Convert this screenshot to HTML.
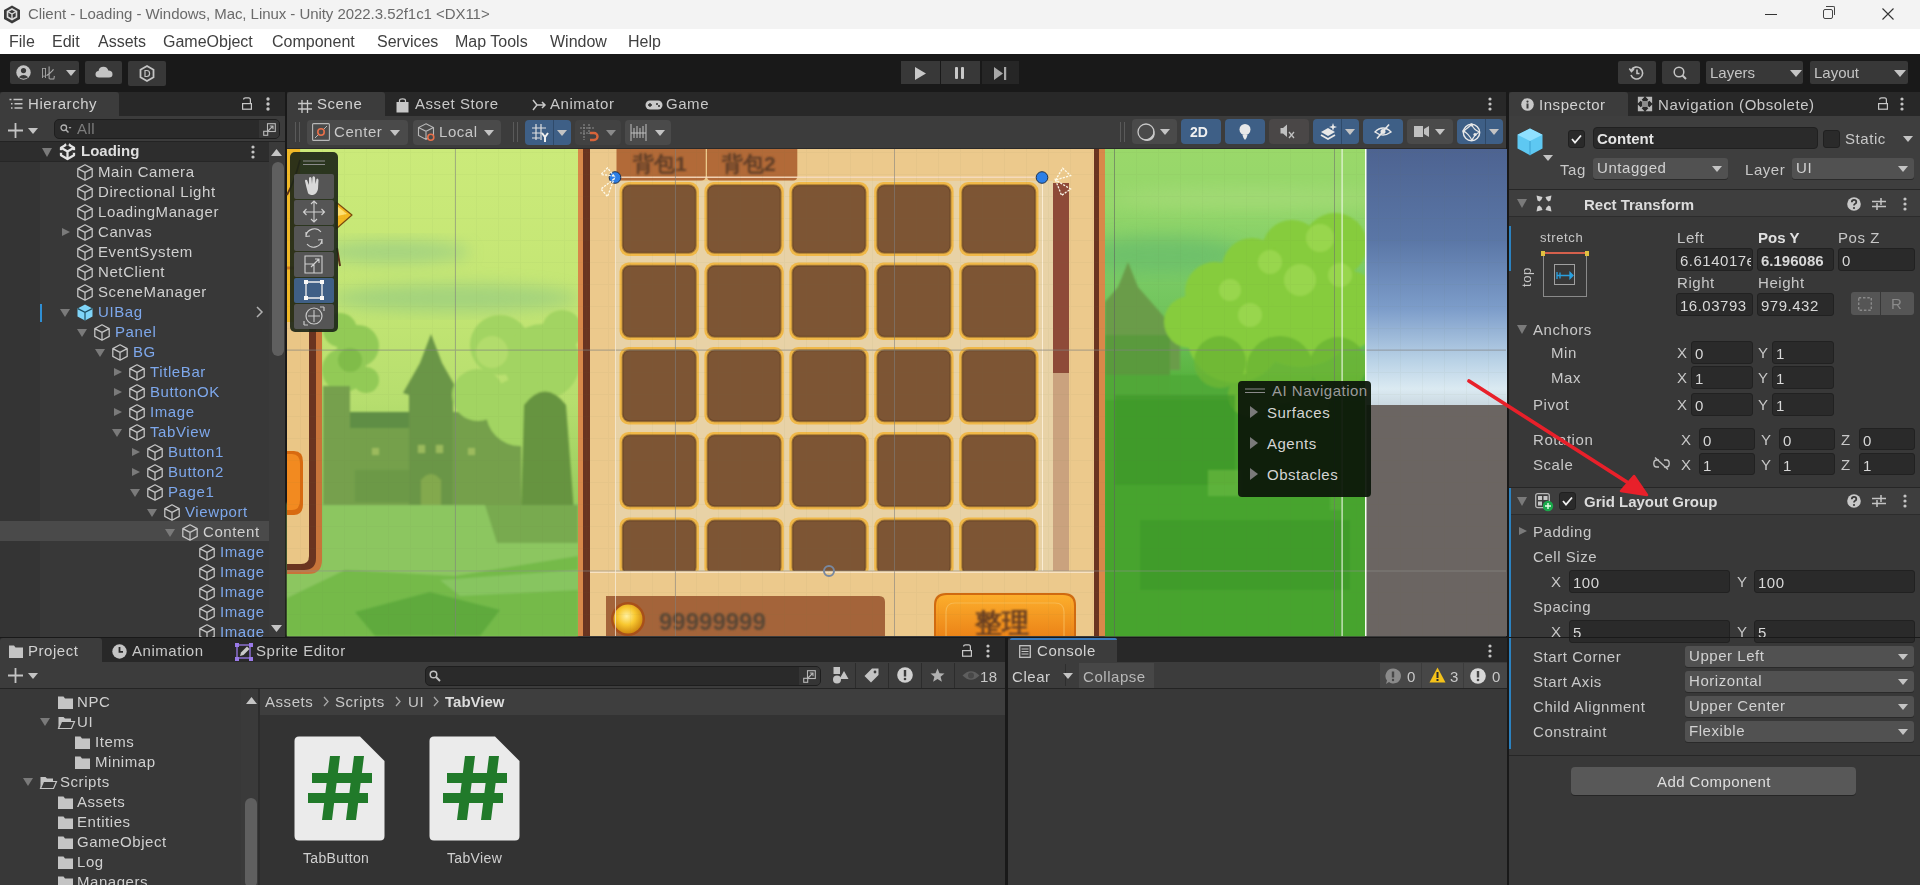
<!DOCTYPE html>
<html><head><meta charset="utf-8">
<style>
*{box-sizing:border-box;margin:0;padding:0}
html,body{width:1920px;height:885px;overflow:hidden;background:#191919;font-family:"Liberation Sans",sans-serif;-webkit-font-smoothing:antialiased;}
.t{will-change:transform}
.a{position:absolute}
.t{position:absolute;white-space:nowrap;color:#c8c8c8;font-size:14px;line-height:20px}
svg{position:absolute;overflow:visible}
.btn{position:absolute;background:#585858;border-radius:3px}
.fld{position:absolute;background:#2a2a2a;border:1px solid #212121;border-radius:3px}
.dd{position:absolute;background:#515151;border:1px solid #303030;border-radius:3px}
.tri{position:absolute;width:0;height:0;border-left:5px solid transparent;border-right:5px solid transparent;border-top:6px solid #c4c4c4}
.trir{position:absolute;width:0;height:0;border-top:5px solid transparent;border-bottom:5px solid transparent;border-left:7px solid #7a7a7a}
.trid{position:absolute;width:0;height:0;border-left:5px solid transparent;border-right:5px solid transparent;border-top:8px solid #7a7a7a}
.blue{color:#7ea8ee}
</style></head><body>

<!-- TITLE BAR -->
<div class="a" style="left:0;top:0;width:1920px;height:29px;background:#f3f3f3"></div>
<svg style="left:3px;top:5px" width="18" height="19" viewBox="0 0 18 19"><path d="M9 0.5 L17 5 L17 14 L9 18.5 L1 14 L1 5 Z" fill="#3a3a3a"/><path d="M9 4 L13.5 6.5 L13.5 12 L9 14.5 L4.5 12 L4.5 6.5 Z" fill="none" stroke="#dcdcdc" stroke-width="1.6"/><path d="M4.5 6.5 L9 9 L13.5 6.5 M9 9 L9 14.5" stroke="#dcdcdc" stroke-width="1.4" fill="none"/></svg>
<div class="t" style="left:28px;top:4px;font-size:15px;color:#6a6a6a;letter-spacing:-0.05px">Client - Loading - Windows, Mac, Linux - Unity 2022.3.52f1c1 &lt;DX11&gt;</div>
<div class="a" style="left:1765px;top:14px;width:12px;height:1px;background:#333"></div>
<div class="a" style="left:1823px;top:9px;width:10px;height:10px;border:1px solid #444;border-radius:2px"></div>
<div class="a" style="left:1826px;top:6px;width:9px;height:9px;border-top:1px solid #444;border-right:1px solid #444;border-radius:0 2px 0 0"></div>
<svg style="left:1882px;top:8px" width="12" height="12"><path d="M0.5 0.5 L11.5 11.5 M11.5 0.5 L0.5 11.5" stroke="#333" stroke-width="1.1"/></svg>
<!-- MENU BAR -->
<div class="a" style="left:0;top:29px;width:1920px;height:25px;background:#ffffff"></div>
<div class="t" style="left:9px;top:32px;font-size:16px;color:#404040">File</div>
<div class="t" style="left:52px;top:32px;font-size:16px;color:#404040">Edit</div>
<div class="t" style="left:98px;top:32px;font-size:16px;color:#404040">Assets</div>
<div class="t" style="left:163px;top:32px;font-size:16px;color:#404040">GameObject</div>
<div class="t" style="left:272px;top:32px;font-size:16px;color:#404040">Component</div>
<div class="t" style="left:377px;top:32px;font-size:16px;color:#404040">Services</div>
<div class="t" style="left:455px;top:32px;font-size:16px;color:#404040">Map Tools</div>
<div class="t" style="left:550px;top:32px;font-size:16px;color:#404040">Window</div>
<div class="t" style="left:628px;top:32px;font-size:16px;color:#404040">Help</div>
<!-- MAIN TOOLBAR -->
<div class="a" style="left:0;top:54px;width:1920px;height:38px;background:#191919"></div>
<div class="a" style="left:10px;top:61px;width:69px;height:23px;background:#383838;border-radius:2px"></div>
<svg style="left:16px;top:65px" width="15" height="15" viewBox="0 0 15 15"><circle cx="7.5" cy="7.5" r="7.2" fill="#c4c4c4"/><circle cx="7.5" cy="5.6" r="2.6" fill="#383838"/><path d="M2.8 12.3 Q7.5 7.5 12.2 12.3 Q7.5 15 2.8 12.3Z" fill="#383838"/></svg>
<div class="t" style="left:41px;top:63px;font-size:14px;color:#a8a8a8">叱</div>
<div class="tri" style="left:66px;top:70px"></div>
<div class="a" style="left:85px;top:61px;width:37px;height:23px;background:#383838;border-radius:2px"></div>
<svg style="left:95px;top:66px" width="18" height="12" viewBox="0 0 18 12"><path d="M4 11.5 Q0.5 11.5 0.5 8.2 Q0.5 5.3 3.5 5 Q4.2 0.8 8.5 0.8 Q12.5 0.8 13.3 4.6 Q17.5 4.8 17.5 8.2 Q17.5 11.5 14 11.5Z" fill="#c4c4c4"/></svg>
<div class="a" style="left:128px;top:61px;width:38px;height:25px;background:#383838;border-radius:2px"></div>
<svg style="left:139px;top:65px" width="16" height="17" viewBox="0 0 16 17"><path d="M8 1 L14.5 4.7 L14.5 12.3 L8 16 L1.5 12.3 L1.5 4.7Z" fill="none" stroke="#c4c4c4" stroke-width="1.8"/><path d="M6 5.5 H7.8 Q10.6 5.5 10.6 8.5 Q10.6 11.5 7.8 11.5 H6Z" fill="none" stroke="#c4c4c4" stroke-width="1.2"/></svg>
<div class="a" style="left:901px;top:61px;width:39px;height:23px;background:#383838"></div>
<div class="a" style="left:941px;top:61px;width:39px;height:23px;background:#383838"></div>
<div class="a" style="left:982px;top:61px;width:37px;height:23px;background:#262626"></div>
<svg style="left:915px;top:67px" width="11" height="13"><path d="M0 0 L11 6.5 L0 13Z" fill="#c8c8c8"/></svg>
<div class="a" style="left:955px;top:67px;width:3px;height:12px;background:#c8c8c8;border-radius:1px"></div>
<div class="a" style="left:961px;top:67px;width:3px;height:12px;background:#c8c8c8;border-radius:1px"></div>
<svg style="left:994px;top:67px" width="13" height="13"><path d="M0 0 L9 6.5 L0 13Z" fill="#a8a8a8"/><rect x="10" y="0" width="2.2" height="13" fill="#a8a8a8"/></svg>
<div class="a" style="left:1618px;top:61px;width:38px;height:23px;background:#383838;border-radius:2px"></div>
<svg style="left:1629px;top:66px" width="15" height="14" viewBox="0 0 15 14"><path d="M2.2 4.5 A6 6 0 1 1 2 9" fill="none" stroke="#c4c4c4" stroke-width="1.6"/><path d="M0.3 2.5 L2.5 5.5 L5 3" fill="none" stroke="#c4c4c4" stroke-width="1.5"/><path d="M8 3.5 L8 7.5 L10.5 7.5" fill="none" stroke="#c4c4c4" stroke-width="1.6"/></svg>
<div class="a" style="left:1662px;top:61px;width:38px;height:23px;background:#383838;border-radius:2px"></div>
<svg style="left:1673px;top:66px" width="15" height="14" viewBox="0 0 15 14"><circle cx="6" cy="6" r="4.8" fill="none" stroke="#c4c4c4" stroke-width="1.5"/><path d="M9.5 9.5 L13 13" stroke="#c4c4c4" stroke-width="2"/></svg>
<div class="a" style="left:1706px;top:61px;width:97px;height:23px;background:#383838;border-radius:2px"></div>
<div class="t" style="left:1710px;top:63px;font-size:15px;color:#c4c4c4">Layers</div>
<div class="tri" style="left:1790px;top:70px;border-left-width:6px;border-right-width:6px;border-top-width:7px"></div>
<div class="a" style="left:1810px;top:61px;width:98px;height:23px;background:#383838;border-radius:2px"></div>
<div class="t" style="left:1814px;top:63px;font-size:15px;color:#c4c4c4">Layout</div>
<div class="tri" style="left:1894px;top:70px;border-left-width:6px;border-right-width:6px;border-top-width:7px"></div>

<!-- HIERARCHY -->
<div class="a" style="left:0;top:92px;width:285px;height:545px;background:#383838;overflow:hidden">
<div class="a" style="left:0;top:0;width:285px;height:24px;background:#282828"></div>
<div class="a" style="left:0;top:0;width:119px;height:24px;background:#3c3c3c;border-radius:3px 3px 0 0"></div>
<svg style="left:9px;top:6px" width="14" height="12" viewBox="0 0 14 12"><path d="M0.5 1.5 H2.5 M4.5 1.5 H13.5 M2 5.8 H3.5 M5.5 5.8 H13.5 M2 10 H3.5 M5.5 10 H13.5" stroke="#c4c4c4" stroke-width="1.4"/></svg>
<div class="t" style="left:28px;top:2px;font-size:15px;letter-spacing:0.55px;color:#d0d0d0">Hierarchy</div>
<svg style="left:241px;top:5px" width="12" height="14" viewBox="0 0 12 14"><rect x="1.6" y="6.6" width="8.8" height="5.6" fill="none" stroke="#c8c8c8" stroke-width="1.2"/><path d="M2.6 2.6 Q2.6 0.8 4.6 0.8 H7.6 Q9.4 0.8 9.4 2.8 V6.6" fill="none" stroke="#c8c8c8" stroke-width="1.2"/></svg>
<svg style="left:266px;top:5px" width="4" height="14"><circle cx="2" cy="2" r="1.7" fill="#c4c4c4"/><circle cx="2" cy="7" r="1.7" fill="#c4c4c4"/><circle cx="2" cy="12" r="1.7" fill="#c4c4c4"/></svg>
<div class="a" style="left:0;top:24px;width:285px;height:25px;background:#3c3c3c"></div>
<div class="a" style="left:0;top:49px;width:285px;height:1px;background:#232323"></div>
<svg style="left:8px;top:31px" width="15" height="15"><path d="M7.5 0 V15 M0 7.5 H15" stroke="#c4c4c4" stroke-width="1.8"/></svg>
<div class="tri" style="left:28px;top:36px"></div>
<div class="a" style="left:54px;top:27px;width:226px;height:20px;background:#2a2a2a;border:1px solid #1e1e1e;border-radius:5px"></div>
<div class="a" style="left:259px;top:28px;width:20px;height:18px;background:#353535;border-radius:0 4px 4px 0"></div>
<svg style="left:60px;top:32px" width="12" height="10" viewBox="0 0 12 10"><circle cx="3.8" cy="3.8" r="2.8" fill="none" stroke="#b0b0b0" stroke-width="1.3"/><path d="M5.8 5.8 L8.5 8.5" stroke="#b0b0b0" stroke-width="1.5"/><path d="M8.5 3 L11.5 3 L10 4.8Z" fill="#b0b0b0"/></svg>
<div class="t" style="left:77px;top:27px;font-size:15px;color:#7d7d7d;letter-spacing:0.4px">All</div>
<svg style="left:263px;top:31px" width="13" height="13" viewBox="0 0 13 13"><rect x="4.5" y="0.7" width="7.8" height="7.8" fill="none" stroke="#b8b8b8" stroke-width="1.1"/><rect x="0.7" y="8.3" width="4" height="4" fill="none" stroke="#b8b8b8" stroke-width="1.1"/><path d="M4.5 8.5 L10 3 M6.8 3 H10 V6.2" fill="none" stroke="#b8b8b8" stroke-width="1.1"/></svg>
<div class="a" style="left:0;top:50px;width:40px;height:495px;background:#343434"></div>
<div class="a" style="left:0;top:50px;width:269px;height:19px;background:#2d2d2d"></div>
<div class="a" style="left:0;top:69px;width:269px;height:1px;background:#262626"></div>
<div class="a" style="left:0;top:429px;width:269px;height:20px;background:#4a4a4a"></div>
<div class="a" style="left:269px;top:50px;width:16px;height:495px;background:#3a3a3a"></div>
<svg style="left:271px;top:57px" width="11" height="7"><path d="M0 7 L5.5 0 L11 7Z" fill="#c4c4c4"/></svg>
<div class="a" style="left:272px;top:70px;width:12px;height:194px;background:#5f5f5f;border-radius:6px"></div>
<svg style="left:271px;top:533px" width="11" height="7"><path d="M0 0 L5.5 7 L11 0Z" fill="#c4c4c4"/></svg>
<div class="trid" style="left:42px;top:56px;border-left-width:5.5px;border-right-width:5.5px;border-top-width:9px"></div>
<svg style="left:60px;top:51px" width="15" height="17" viewBox="0 0 15 17"><path d="M7.5 1 L14 4.7 L14 12.3 L7.5 16 L1 12.3 L1 4.7Z" fill="none" stroke="#e4e4e4" stroke-width="2.3" stroke-linejoin="round"/><path d="M1 4.7 L7.5 8.5 L14 4.7 M7.5 8.5 L7.5 16" fill="none" stroke="#e4e4e4" stroke-width="2.3"/><g fill="#2d2d2d"><rect x="6" y="-1" width="3" height="3.5"/><rect x="-1" y="7.2" width="3.5" height="2.6"/><rect x="12.5" y="7.2" width="3.5" height="2.6"/></g><path d="M4.5 1.8 L6.2 1.2 M10.5 1.8 L8.8 1.2" stroke="#e4e4e4" stroke-width="1.5"/></svg>
<div class="t" style="left:81px;top:49px;font-size:15px;font-weight:700;color:#dedede">Loading</div>
<svg style="left:251px;top:53px" width="4" height="14"><circle cx="2" cy="2" r="1.6" fill="#c4c4c4"/><circle cx="2" cy="7" r="1.6" fill="#c4c4c4"/><circle cx="2" cy="12" r="1.6" fill="#c4c4c4"/></svg>
<svg style="left:77px;top:72px" width="16" height="17" viewBox="0 0 16 17"><path d="M8 0.8 L15.2 4.6 L15.2 12.4 L8 16.2 L0.8 12.4 L0.8 4.6Z M0.8 4.6 L8 8.4 L15.2 4.6 M8 8.4 L8 16.2" fill="none" stroke="#c4c4c4" stroke-width="1.3" stroke-linejoin="round"/></svg>
<div class="t" style="left:98px;top:70px;font-size:15px;letter-spacing:0.6px;color:#d0d0d0">Main Camera</div>
<svg style="left:77px;top:92px" width="16" height="17" viewBox="0 0 16 17"><path d="M8 0.8 L15.2 4.6 L15.2 12.4 L8 16.2 L0.8 12.4 L0.8 4.6Z M0.8 4.6 L8 8.4 L15.2 4.6 M8 8.4 L8 16.2" fill="none" stroke="#c4c4c4" stroke-width="1.3" stroke-linejoin="round"/></svg>
<div class="t" style="left:98px;top:90px;font-size:15px;letter-spacing:0.6px;color:#d0d0d0">Directional Light</div>
<svg style="left:77px;top:112px" width="16" height="17" viewBox="0 0 16 17"><path d="M8 0.8 L15.2 4.6 L15.2 12.4 L8 16.2 L0.8 12.4 L0.8 4.6Z M0.8 4.6 L8 8.4 L15.2 4.6 M8 8.4 L8 16.2" fill="none" stroke="#c4c4c4" stroke-width="1.3" stroke-linejoin="round"/></svg>
<div class="t" style="left:98px;top:110px;font-size:15px;letter-spacing:0.6px;color:#d0d0d0">LoadingManager</div>
<div class="trir" style="left:62px;top:136px;border-top-width:4.5px;border-bottom-width:4.5px;border-left-width:8px"></div>
<svg style="left:77px;top:132px" width="16" height="17" viewBox="0 0 16 17"><path d="M8 0.8 L15.2 4.6 L15.2 12.4 L8 16.2 L0.8 12.4 L0.8 4.6Z M0.8 4.6 L8 8.4 L15.2 4.6 M8 8.4 L8 16.2" fill="none" stroke="#c4c4c4" stroke-width="1.3" stroke-linejoin="round"/></svg>
<div class="t" style="left:98px;top:130px;font-size:15px;letter-spacing:0.6px;color:#d0d0d0">Canvas</div>
<svg style="left:77px;top:152px" width="16" height="17" viewBox="0 0 16 17"><path d="M8 0.8 L15.2 4.6 L15.2 12.4 L8 16.2 L0.8 12.4 L0.8 4.6Z M0.8 4.6 L8 8.4 L15.2 4.6 M8 8.4 L8 16.2" fill="none" stroke="#c4c4c4" stroke-width="1.3" stroke-linejoin="round"/></svg>
<div class="t" style="left:98px;top:150px;font-size:15px;letter-spacing:0.6px;color:#d0d0d0">EventSystem</div>
<svg style="left:77px;top:172px" width="16" height="17" viewBox="0 0 16 17"><path d="M8 0.8 L15.2 4.6 L15.2 12.4 L8 16.2 L0.8 12.4 L0.8 4.6Z M0.8 4.6 L8 8.4 L15.2 4.6 M8 8.4 L8 16.2" fill="none" stroke="#c4c4c4" stroke-width="1.3" stroke-linejoin="round"/></svg>
<div class="t" style="left:98px;top:170px;font-size:15px;letter-spacing:0.6px;color:#d0d0d0">NetClient</div>
<svg style="left:77px;top:192px" width="16" height="17" viewBox="0 0 16 17"><path d="M8 0.8 L15.2 4.6 L15.2 12.4 L8 16.2 L0.8 12.4 L0.8 4.6Z M0.8 4.6 L8 8.4 L15.2 4.6 M8 8.4 L8 16.2" fill="none" stroke="#c4c4c4" stroke-width="1.3" stroke-linejoin="round"/></svg>
<div class="t" style="left:98px;top:190px;font-size:15px;letter-spacing:0.6px;color:#d0d0d0">SceneManager</div>
<div class="trid" style="left:60px;top:217px;border-left-width:5px;border-right-width:5px;border-top-width:8px"></div>
<svg style="left:77px;top:212px" width="16" height="17" viewBox="0 0 16 17"><path d="M8 0.5 L15.5 4.5 L15.5 12.5 L8 16.5 L0.5 12.5 L0.5 4.5Z" fill="#7fd4f8"/><path d="M0.8 4.6 L8 8.4 L15.2 4.6 M8 8.4 L8 16.2" fill="none" stroke="#1d4e63" stroke-width="1.2"/></svg>
<div class="t" style="left:98px;top:210px;font-size:15px;letter-spacing:0.6px;color:#7ea8ec">UIBag</div>
<div class="trid" style="left:77px;top:237px;border-left-width:5px;border-right-width:5px;border-top-width:8px"></div>
<svg style="left:94px;top:232px" width="16" height="17" viewBox="0 0 16 17"><path d="M8 0.8 L15.2 4.6 L15.2 12.4 L8 16.2 L0.8 12.4 L0.8 4.6Z M0.8 4.6 L8 8.4 L15.2 4.6 M8 8.4 L8 16.2" fill="none" stroke="#c4c4c4" stroke-width="1.3" stroke-linejoin="round"/></svg>
<div class="t" style="left:115px;top:230px;font-size:15px;letter-spacing:0.6px;color:#7ea8ec">Panel</div>
<div class="trid" style="left:95px;top:257px;border-left-width:5px;border-right-width:5px;border-top-width:8px"></div>
<svg style="left:112px;top:252px" width="16" height="17" viewBox="0 0 16 17"><path d="M8 0.8 L15.2 4.6 L15.2 12.4 L8 16.2 L0.8 12.4 L0.8 4.6Z M0.8 4.6 L8 8.4 L15.2 4.6 M8 8.4 L8 16.2" fill="none" stroke="#c4c4c4" stroke-width="1.3" stroke-linejoin="round"/></svg>
<div class="t" style="left:133px;top:250px;font-size:15px;letter-spacing:0.6px;color:#7ea8ec">BG</div>
<div class="trir" style="left:114px;top:276px;border-top-width:4.5px;border-bottom-width:4.5px;border-left-width:8px"></div>
<svg style="left:129px;top:272px" width="16" height="17" viewBox="0 0 16 17"><path d="M8 0.8 L15.2 4.6 L15.2 12.4 L8 16.2 L0.8 12.4 L0.8 4.6Z M0.8 4.6 L8 8.4 L15.2 4.6 M8 8.4 L8 16.2" fill="none" stroke="#c4c4c4" stroke-width="1.3" stroke-linejoin="round"/></svg>
<div class="t" style="left:150px;top:270px;font-size:15px;letter-spacing:0.6px;color:#7ea8ec">TitleBar</div>
<div class="trir" style="left:114px;top:296px;border-top-width:4.5px;border-bottom-width:4.5px;border-left-width:8px"></div>
<svg style="left:129px;top:292px" width="16" height="17" viewBox="0 0 16 17"><path d="M8 0.8 L15.2 4.6 L15.2 12.4 L8 16.2 L0.8 12.4 L0.8 4.6Z M0.8 4.6 L8 8.4 L15.2 4.6 M8 8.4 L8 16.2" fill="none" stroke="#c4c4c4" stroke-width="1.3" stroke-linejoin="round"/></svg>
<div class="t" style="left:150px;top:290px;font-size:15px;letter-spacing:0.6px;color:#7ea8ec">ButtonOK</div>
<div class="trir" style="left:114px;top:316px;border-top-width:4.5px;border-bottom-width:4.5px;border-left-width:8px"></div>
<svg style="left:129px;top:312px" width="16" height="17" viewBox="0 0 16 17"><path d="M8 0.8 L15.2 4.6 L15.2 12.4 L8 16.2 L0.8 12.4 L0.8 4.6Z M0.8 4.6 L8 8.4 L15.2 4.6 M8 8.4 L8 16.2" fill="none" stroke="#c4c4c4" stroke-width="1.3" stroke-linejoin="round"/></svg>
<div class="t" style="left:150px;top:310px;font-size:15px;letter-spacing:0.6px;color:#7ea8ec">Image</div>
<div class="trid" style="left:112px;top:337px;border-left-width:5px;border-right-width:5px;border-top-width:8px"></div>
<svg style="left:129px;top:332px" width="16" height="17" viewBox="0 0 16 17"><path d="M8 0.8 L15.2 4.6 L15.2 12.4 L8 16.2 L0.8 12.4 L0.8 4.6Z M0.8 4.6 L8 8.4 L15.2 4.6 M8 8.4 L8 16.2" fill="none" stroke="#c4c4c4" stroke-width="1.3" stroke-linejoin="round"/></svg>
<div class="t" style="left:150px;top:330px;font-size:15px;letter-spacing:0.6px;color:#7ea8ec">TabView</div>
<div class="trir" style="left:132px;top:356px;border-top-width:4.5px;border-bottom-width:4.5px;border-left-width:8px"></div>
<svg style="left:147px;top:352px" width="16" height="17" viewBox="0 0 16 17"><path d="M8 0.8 L15.2 4.6 L15.2 12.4 L8 16.2 L0.8 12.4 L0.8 4.6Z M0.8 4.6 L8 8.4 L15.2 4.6 M8 8.4 L8 16.2" fill="none" stroke="#c4c4c4" stroke-width="1.3" stroke-linejoin="round"/></svg>
<div class="t" style="left:168px;top:350px;font-size:15px;letter-spacing:0.6px;color:#7ea8ec">Button1</div>
<div class="trir" style="left:132px;top:376px;border-top-width:4.5px;border-bottom-width:4.5px;border-left-width:8px"></div>
<svg style="left:147px;top:372px" width="16" height="17" viewBox="0 0 16 17"><path d="M8 0.8 L15.2 4.6 L15.2 12.4 L8 16.2 L0.8 12.4 L0.8 4.6Z M0.8 4.6 L8 8.4 L15.2 4.6 M8 8.4 L8 16.2" fill="none" stroke="#c4c4c4" stroke-width="1.3" stroke-linejoin="round"/></svg>
<div class="t" style="left:168px;top:370px;font-size:15px;letter-spacing:0.6px;color:#7ea8ec">Button2</div>
<div class="trid" style="left:130px;top:397px;border-left-width:5px;border-right-width:5px;border-top-width:8px"></div>
<svg style="left:147px;top:392px" width="16" height="17" viewBox="0 0 16 17"><path d="M8 0.8 L15.2 4.6 L15.2 12.4 L8 16.2 L0.8 12.4 L0.8 4.6Z M0.8 4.6 L8 8.4 L15.2 4.6 M8 8.4 L8 16.2" fill="none" stroke="#c4c4c4" stroke-width="1.3" stroke-linejoin="round"/></svg>
<div class="t" style="left:168px;top:390px;font-size:15px;letter-spacing:0.6px;color:#7ea8ec">Page1</div>
<div class="trid" style="left:147px;top:417px;border-left-width:5px;border-right-width:5px;border-top-width:8px"></div>
<svg style="left:164px;top:412px" width="16" height="17" viewBox="0 0 16 17"><path d="M8 0.8 L15.2 4.6 L15.2 12.4 L8 16.2 L0.8 12.4 L0.8 4.6Z M0.8 4.6 L8 8.4 L15.2 4.6 M8 8.4 L8 16.2" fill="none" stroke="#c4c4c4" stroke-width="1.3" stroke-linejoin="round"/></svg>
<div class="t" style="left:185px;top:410px;font-size:15px;letter-spacing:0.6px;color:#7ea8ec">Viewport</div>
<div class="trid" style="left:165px;top:437px;border-left-width:5px;border-right-width:5px;border-top-width:8px"></div>
<svg style="left:182px;top:432px" width="16" height="17" viewBox="0 0 16 17"><path d="M8 0.8 L15.2 4.6 L15.2 12.4 L8 16.2 L0.8 12.4 L0.8 4.6Z M0.8 4.6 L8 8.4 L15.2 4.6 M8 8.4 L8 16.2" fill="none" stroke="#c4c4c4" stroke-width="1.3" stroke-linejoin="round"/></svg>
<div class="t" style="left:203px;top:430px;font-size:15px;letter-spacing:0.6px;color:#d0d0d0">Content</div>
<svg style="left:199px;top:452px" width="16" height="17" viewBox="0 0 16 17"><path d="M8 0.8 L15.2 4.6 L15.2 12.4 L8 16.2 L0.8 12.4 L0.8 4.6Z M0.8 4.6 L8 8.4 L15.2 4.6 M8 8.4 L8 16.2" fill="none" stroke="#c4c4c4" stroke-width="1.3" stroke-linejoin="round"/></svg>
<div class="t" style="left:220px;top:450px;font-size:15px;letter-spacing:0.6px;color:#7ea8ec">Image</div>
<svg style="left:199px;top:472px" width="16" height="17" viewBox="0 0 16 17"><path d="M8 0.8 L15.2 4.6 L15.2 12.4 L8 16.2 L0.8 12.4 L0.8 4.6Z M0.8 4.6 L8 8.4 L15.2 4.6 M8 8.4 L8 16.2" fill="none" stroke="#c4c4c4" stroke-width="1.3" stroke-linejoin="round"/></svg>
<div class="t" style="left:220px;top:470px;font-size:15px;letter-spacing:0.6px;color:#7ea8ec">Image</div>
<svg style="left:199px;top:492px" width="16" height="17" viewBox="0 0 16 17"><path d="M8 0.8 L15.2 4.6 L15.2 12.4 L8 16.2 L0.8 12.4 L0.8 4.6Z M0.8 4.6 L8 8.4 L15.2 4.6 M8 8.4 L8 16.2" fill="none" stroke="#c4c4c4" stroke-width="1.3" stroke-linejoin="round"/></svg>
<div class="t" style="left:220px;top:490px;font-size:15px;letter-spacing:0.6px;color:#7ea8ec">Image</div>
<svg style="left:199px;top:512px" width="16" height="17" viewBox="0 0 16 17"><path d="M8 0.8 L15.2 4.6 L15.2 12.4 L8 16.2 L0.8 12.4 L0.8 4.6Z M0.8 4.6 L8 8.4 L15.2 4.6 M8 8.4 L8 16.2" fill="none" stroke="#c4c4c4" stroke-width="1.3" stroke-linejoin="round"/></svg>
<div class="t" style="left:220px;top:510px;font-size:15px;letter-spacing:0.6px;color:#7ea8ec">Image</div>
<svg style="left:199px;top:532px" width="16" height="17" viewBox="0 0 16 17"><path d="M8 0.8 L15.2 4.6 L15.2 12.4 L8 16.2 L0.8 12.4 L0.8 4.6Z M0.8 4.6 L8 8.4 L15.2 4.6 M8 8.4 L8 16.2" fill="none" stroke="#c4c4c4" stroke-width="1.3" stroke-linejoin="round"/></svg>
<div class="t" style="left:220px;top:530px;font-size:15px;letter-spacing:0.6px;color:#7ea8ec">Image</div>
<div class="a" style="left:40px;top:212px;width:2px;height:18px;background:#2f8fd4"></div>
<svg style="left:256px;top:214px" width="7" height="12"><path d="M1 1 L6 6 L1 11" fill="none" stroke="#b0b0b0" stroke-width="1.5"/></svg>
</div>

<!-- SCENE -->
<div class="a" style="left:287px;top:92px;width:1219px;height:545px;background:#3c3c3c;overflow:hidden">
<div class="a" style="left:0;top:0;width:1219px;height:24px;background:#282828"></div>
<div class="a" style="left:0;top:0;width:98px;height:24px;background:#3c3c3c;border-radius:3px 3px 0 0"></div>
<svg style="left:11px;top:8px" width="14" height="13" viewBox="0 0 14 13"><path d="M4 0 V13 M9.5 0 V13 M0 3.5 H14 M0 9 H14" stroke="#c8c8c8" stroke-width="1.3"/></svg>
<div class="t" style="left:30px;top:2px;font-size:15px;letter-spacing:0.55px;color:#d2d2d2">Scene</div>
<svg style="left:109px;top:6px" width="13" height="15" viewBox="0 0 13 15"><path d="M3.5 4 V2.5 Q3.5 0.8 6.5 0.8 Q9.5 0.8 9.5 2.5 V4" fill="none" stroke="#c8c8c8" stroke-width="1.2"/><rect x="0.5" y="4" width="12" height="10.5" fill="#c8c8c8"/></svg>
<div class="t" style="left:128px;top:2px;font-size:15px;letter-spacing:0.55px;color:#c8c8c8">Asset Store</div>
<svg style="left:245px;top:7px" width="14" height="12" viewBox="0 0 14 12"><path d="M1 1 L5 6 L1 11 M5 6 H13 M10 3 L13 6 L10 9" fill="none" stroke="#c8c8c8" stroke-width="1.5"/></svg>
<div class="t" style="left:263px;top:2px;font-size:15px;letter-spacing:0.55px;color:#c8c8c8">Animator</div>
<svg style="left:358px;top:8px" width="18" height="10" viewBox="0 0 18 10"><rect x="0.5" y="0.5" width="17" height="9" rx="4.5" fill="#c8c8c8"/><path d="M3 5 H7 M5 3 V7" stroke="#282828" stroke-width="1.3"/><circle cx="12" cy="4" r="1" fill="#282828"/><circle cx="14" cy="6" r="1" fill="#282828"/></svg>
<div class="t" style="left:379px;top:2px;font-size:15px;letter-spacing:0.55px;color:#c8c8c8">Game</div>
<svg style="left:1201px;top:5px" width="4" height="14"><circle cx="2" cy="2" r="1.6" fill="#c4c4c4"/><circle cx="2" cy="7" r="1.6" fill="#c4c4c4"/><circle cx="2" cy="12" r="1.6" fill="#c4c4c4"/></svg>
<div class="a" style="left:8px;top:30px;width:1px;height:20px;background:#5a5a5a"></div><div class="a" style="left:12px;top:30px;width:1px;height:20px;background:#5a5a5a"></div>
<div class="a" style="left:20px;top:28px;width:101px;height:25px;background:#4a4a4a;border-radius:4px"></div>
<svg style="left:25px;top:31px" width="18" height="18" viewBox="0 0 18 18"><rect x="0.6" y="0.6" width="16.8" height="16.8" rx="1" fill="none" stroke="#b8b8b8" stroke-width="1.1"/><path d="M3 15 L15 3" stroke="#b8b8b8" stroke-width="1"/><circle cx="9" cy="9" r="3.2" fill="#4a4a4a" stroke="#e8704a" stroke-width="1.6"/></svg>
<div class="t" style="left:47px;top:30px;font-size:15px;letter-spacing:0.55px;color:#c8c8c8">Center</div>
<div class="tri" style="left:103px;top:38px;border-left-width:5.5px;border-right-width:5.5px;border-top-width:6.5px"></div>
<div class="a" style="left:126px;top:28px;width:88px;height:25px;background:#4a4a4a;border-radius:4px"></div>
<svg style="left:130px;top:31px" width="19" height="19" viewBox="0 0 19 19"><path d="M9 0.8 L16.5 4.5 L16.5 12.5 L9 16.5 L1.5 12.5 L1.5 4.5Z M1.5 4.5 L9 8.3 L16.5 4.5 M9 8.3 V16.5" fill="none" stroke="#b8b8b8" stroke-width="1.1"/><circle cx="13.8" cy="14.2" r="3" fill="#4a4a4a" stroke="#e8704a" stroke-width="1.6"/></svg>
<div class="t" style="left:152px;top:30px;font-size:15px;letter-spacing:0.55px;color:#c8c8c8">Local</div>
<div class="tri" style="left:197px;top:38px;border-left-width:5.5px;border-right-width:5.5px;border-top-width:6.5px"></div>
<div class="a" style="left:226px;top:30px;width:1px;height:20px;background:#5a5a5a"></div><div class="a" style="left:230px;top:30px;width:1px;height:20px;background:#5a5a5a"></div>
<div class="a" style="left:238px;top:28px;width:46px;height:25px;background:#3e5f86;border-radius:4px"></div>
<div class="a" style="left:266px;top:28px;width:1px;height:25px;background:#2f4a6a"></div>
<svg style="left:245px;top:32px" width="18" height="18" viewBox="0 0 18 18"><path d="M4 0 V16 M9 0 V16 M0 4 H14 M0 9 H10 M0 14 H8" stroke="#e0e0e0" stroke-width="1.2"/><path d="M10 9 L13 13 L16 9 M13 13 V18" fill="none" stroke="#f0f0f0" stroke-width="2"/></svg>
<div class="tri" style="left:270px;top:38px;border-left-width:5px;border-right-width:5px;border-top-width:6px"></div>
<div class="a" style="left:288px;top:28px;width:46px;height:25px;background:#424242;border-radius:4px"></div>
<svg style="left:293px;top:32px" width="18" height="18" viewBox="0 0 18 18"><path d="M4 0 V16 M9 0 V10 M0 4 H14 M0 9 H10" stroke="#8a8a8a" stroke-width="1.1" stroke-dasharray="2 1"/><path d="M10 9 H14 A3.5 3.5 0 0 1 14 16 H10" fill="none" stroke="#d8643a" stroke-width="2.4"/></svg>
<div class="tri" style="left:319px;top:38px;border-left-width:5px;border-right-width:5px;border-top-width:6px;border-top-color:#8a8a8a"></div>
<div class="a" style="left:338px;top:28px;width:46px;height:25px;background:#4a4a4a;border-radius:4px"></div>
<svg style="left:343px;top:32px" width="17" height="17" viewBox="0 0 17 17"><path d="M1 0 V17 M16 0 V17 M4 4 V14 M7 2 V14 M10 4 V14 M13 2 V14 M1 9 H16" stroke="#c0c0c0" stroke-width="1"/></svg>
<div class="tri" style="left:368px;top:38px;border-left-width:5px;border-right-width:5px;border-top-width:6px"></div>
<div class="a" style="left:833px;top:30px;width:1px;height:20px;background:#5a5a5a"></div><div class="a" style="left:837px;top:30px;width:1px;height:20px;background:#5a5a5a"></div>
<div class="a" style="left:845px;top:27px;width:45px;height:25px;background:#4a4a4a;border-radius:4px"></div>
<svg style="left:850px;top:31px" width="18" height="18" viewBox="0 0 18 18"><circle cx="9" cy="9" r="8" fill="none" stroke="#c8c8c8" stroke-width="1.3"/><path d="M5 15.5 A8 8 0 0 0 16 6 A6 6 0 0 1 5 15.5Z" fill="#c8c8c8"/></svg>
<div class="tri" style="left:873px;top:37px;border-left-width:5px;border-right-width:5px;border-top-width:6px"></div>
<div class="a" style="left:894px;top:27px;width:40px;height:25px;background:#3e5f86;border-radius:4px"></div>
<div class="t" style="left:903px;top:30px;font-size:14px;font-weight:700;color:#f0f0f0">2D</div>
<div class="a" style="left:938px;top:27px;width:40px;height:25px;background:#3e5f86;border-radius:4px"></div>
<svg style="left:951px;top:31px" width="14" height="18" viewBox="0 0 14 18"><circle cx="7" cy="6.5" r="5.5" fill="#e8e8e8"/><path d="M4.5 12 H9.5 L8.5 15 L7 17 L5.5 15Z" fill="#e8e8e8"/></svg>
<div class="a" style="left:982px;top:27px;width:40px;height:25px;background:#4a4747;border-radius:4px"></div>
<svg style="left:993px;top:32px" width="18" height="16" viewBox="0 0 18 16"><path d="M0.5 4 H3 L7 0.5 V13 L3 9.5 H0.5Z" fill="#c0c0c0"/><path d="M9 8 L14 14 M14 8 L9 14" stroke="#c0c0c0" stroke-width="1.3"/></svg>
<div class="a" style="left:1026px;top:27px;width:46px;height:25px;background:#3e5f86;border-radius:4px"></div>
<div class="a" style="left:1054px;top:27px;width:1px;height:25px;background:#2f4a6a"></div>
<svg style="left:1033px;top:31px" width="18" height="17" viewBox="0 0 18 17"><path d="M1 9 L8 5 L15 9 L8 13Z" fill="#e8e8e8"/><path d="M1 12 L8 16 L15 12" fill="none" stroke="#e8e8e8" stroke-width="1.8"/><path d="M13 0 L14 3 L17 4 L14 5 L13 8 L12 5 L9 4 L12 3Z" fill="#e8e8e8"/></svg>
<div class="tri" style="left:1058px;top:37px;border-left-width:5px;border-right-width:5px;border-top-width:6px"></div>
<div class="a" style="left:1076px;top:27px;width:40px;height:25px;background:#3e5f86;border-radius:4px"></div>
<svg style="left:1087px;top:32px" width="18" height="15" viewBox="0 0 18 15"><path d="M1 8 Q9 0 17 8 Q9 14 1 8Z" fill="none" stroke="#e8e8e8" stroke-width="1.4"/><circle cx="9" cy="7.5" r="2.5" fill="#e8e8e8"/><path d="M3 14.5 L15 0.5" stroke="#e8e8e8" stroke-width="1.6"/></svg>
<div class="a" style="left:1120px;top:27px;width:46px;height:25px;background:#4a4a4a;border-radius:4px"></div>
<svg style="left:1127px;top:33px" width="16" height="13" viewBox="0 0 16 13"><rect x="0" y="1" width="9" height="11" fill="#c0c0c0"/><path d="M10 4 L15 1 V12 L10 9Z" fill="#c0c0c0"/></svg>
<div class="tri" style="left:1148px;top:37px;border-left-width:5px;border-right-width:5px;border-top-width:6px"></div>
<div class="a" style="left:1170px;top:27px;width:46px;height:25px;background:#3e5f86;border-radius:4px"></div>
<div class="a" style="left:1198px;top:27px;width:1px;height:25px;background:#2f4a6a"></div>
<svg style="left:1175px;top:31px" width="19" height="19" viewBox="0 0 19 19"><circle cx="9.5" cy="9.5" r="8.2" fill="none" stroke="#e8e8e8" stroke-width="1.4"/><path d="M1.5 8 Q6 5 9.5 1.5 M9.5 1.5 Q12 7 17.5 9 M17.5 9 Q12 12 10 17.5 M1.5 8 Q7 11 10 17.5" fill="none" stroke="#e8e8e8" stroke-width="1.2"/><circle cx="9.5" cy="1.8" r="1.6" fill="#e8e8e8"/><circle cx="1.8" cy="8" r="1.6" fill="#e8e8e8"/><circle cx="13" cy="11.5" r="1.6" fill="#e8e8e8"/></svg>
<div class="tri" style="left:1202px;top:37px;border-left-width:5px;border-right-width:5px;border-top-width:6px"></div>
<div class="a" style="left:0;top:56px;width:1219px;height:1px;background:#2a2a2a"></div>
</div>
<svg style="left:287px;top:149px" width="1219" height="487" viewBox="287 149 1219 487">
<defs>
<linearGradient id="gbg" x1="0" y1="0" x2="0" y2="1"><stop offset="0" stop-color="#cbea7a"/><stop offset="0.3" stop-color="#c4e674"/><stop offset="0.52" stop-color="#b6de6e"/><stop offset="0.72" stop-color="#98cc5e"/><stop offset="1" stop-color="#82c452"/></linearGradient>
<linearGradient id="gbr" x1="0" y1="0" x2="0" y2="1"><stop offset="0" stop-color="#9ad86a"/><stop offset="0.12" stop-color="#94d66a"/><stop offset="0.24" stop-color="#7ccc66"/><stop offset="0.38" stop-color="#6cc058"/><stop offset="0.48" stop-color="#56b23c"/><stop offset="1" stop-color="#44a42c"/></linearGradient>
<linearGradient id="gsky" x1="0" y1="0" x2="0" y2="1"><stop offset="0" stop-color="#4d6391"/><stop offset="0.35" stop-color="#5a76a6"/><stop offset="0.62" stop-color="#7d9dca"/><stop offset="0.82" stop-color="#b9d2e6"/><stop offset="0.93" stop-color="#dbeaf2"/><stop offset="1" stop-color="#c8d6de"/></linearGradient>
<linearGradient id="gbtn" x1="0" y1="0" x2="0" y2="1"><stop offset="0" stop-color="#fcae2c"/><stop offset="1" stop-color="#ec8418"/></linearGradient>
<radialGradient id="gcoin" cx="0.45" cy="0.4" r="0.6"><stop offset="0" stop-color="#fff0a0"/><stop offset="0.5" stop-color="#f8c830"/><stop offset="1" stop-color="#d08a10"/></radialGradient>
<pattern id="mgrid" x="454" y="350" width="22" height="22" patternUnits="userSpaceOnUse"><path d="M0.5 0 V22 M0 0.5 H22" stroke="#607040" stroke-width="1" fill="none"/></pattern>
<filter id="b3"><feGaussianBlur stdDeviation="3"/></filter>
<filter id="b8"><feGaussianBlur stdDeviation="8"/></filter>
<filter id="b1"><feGaussianBlur stdDeviation="0.9"/></filter>
</defs>
<rect x="287" y="149" width="291" height="487" fill="url(#gbg)"/>
<g filter="url(#b8)" opacity="0.75"><ellipse cx="395" cy="252" rx="75" ry="11" fill="#98cc84"/><ellipse cx="455" cy="298" rx="125" ry="14" fill="#98cc80"/></g>
<g filter="url(#b1)">
<g fill="#92ca56"><circle cx="340" cy="330" r="17"/><circle cx="358" cy="346" r="21"/><circle cx="344" cy="370" r="22"/><circle cx="366" cy="380" r="13"/></g><circle cx="350" cy="360" r="12" fill="#80bc4a"/>
<rect x="287" y="503" width="291" height="133" fill="#8cc660"/>
<rect x="323" y="386" width="27" height="119" fill="#76a04e"/><rect x="350" y="412" width="171" height="93" fill="#74a04c"/><rect x="350" y="412" width="60" height="16" fill="#5f8e44"/><rect x="355" y="470" width="55" height="32" fill="#6a9646" opacity="0.7"/>
<path d="M409 505 V395 L403 393 L420 363 L431 334 L442 363 L459 393 L453 395 V505Z" fill="#6a9646"/>
<g fill="#a6c262" opacity="0.8"><rect x="418" y="445" width="7" height="8"/><rect x="436" y="445" width="7" height="8"/><rect x="372" y="448" width="7" height="7"/><rect x="468" y="448" width="7" height="7"/></g>
<path d="M421 505 V480 Q431 468 441 480 V505Z" fill="#8aae50" opacity="0.8"/>
<g fill="#a2d462"><circle cx="500" cy="345" r="30"/><circle cx="542" cy="362" r="38"/><circle cx="478" cy="395" r="26"/><circle cx="520" cy="412" r="34"/><circle cx="562" cy="330" r="20"/></g><circle cx="492" cy="352" r="16" fill="#b2dc6c"/>
<path d="M521 512 L524 405 Q545 378 566 405 L574 512Z" fill="#66943f"/>
<path d="M485 505 H578 V543 H497Z" fill="#78aa50"/>
<path d="M287 598 L345 570 L455 576 L578 556 L578 636 L287 636Z" fill="#74ba4a"/><path d="M355 612 L430 592 L500 610 L480 636 L375 636Z" fill="#5eaa3c"/><path d="M440 580 L578 570 L578 590 L460 596Z" fill="#8cc866" opacity="0.8"/>
</g>
<rect x="1105" y="149" width="261" height="487" fill="url(#gbr)"/>
<g filter="url(#b8)" opacity="0.7"><ellipse cx="1160" cy="255" rx="85" ry="18" fill="#68bc6c"/><ellipse cx="1250" cy="198" rx="140" ry="10" fill="#a8dc7a"/></g>
<g filter="url(#b1)">
<path d="M1105 360 V302 L1118 287 L1128 262 L1138 287 L1180 335 V370 H1105Z" fill="#6a9c48"/>
<rect x="1105" y="335" width="65" height="70" fill="#5a9a3e"/><rect x="1105" y="395" width="261" height="241" fill="#46a42e"/><rect x="1105" y="375" width="261" height="25" fill="#50aa36" opacity="0.9"/>
<g fill="#86cc3c"><circle cx="1335" cy="245" r="32"/><circle cx="1292" cy="250" r="30"/><circle cx="1252" cy="268" r="30"/><circle cx="1215" cy="292" r="30"/><circle cx="1190" cy="322" r="26"/><circle cx="1300" cy="305" r="62"/><circle cx="1235" cy="335" r="48"/><circle cx="1345" cy="310" r="40"/></g>
<g fill="#9cd850" opacity="0.85"><circle cx="1320" cy="238" r="14"/><circle cx="1270" cy="262" r="12"/><circle cx="1230" cy="290" r="11"/><circle cx="1300" cy="280" r="16"/><circle cx="1250" cy="315" r="12"/><circle cx="1340" cy="275" r="12"/></g>
<g fill="#6cb636" opacity="0.85"><circle cx="1280" cy="370" r="34"/><circle cx="1220" cy="362" r="26"/><circle cx="1338" cy="365" r="28"/><circle cx="1250" cy="395" r="22"/><circle cx="1310" cy="400" r="20"/></g>

<rect x="1115" y="395" width="120" height="90" fill="#3e9628" opacity="0.6"/><rect x="1208" y="470" width="34" height="26" fill="#6cbc44" opacity="0.6"/><rect x="1140" y="520" width="210" height="70" fill="#3a9826" opacity="0.6"/><rect x="1330" y="480" width="12" height="30" fill="#5cb43c" opacity="0.6"/>
</g>
<rect x="1366" y="149" width="141" height="258" fill="url(#gsky)"/>
<rect x="1366" y="405" width="141" height="231" fill="#6b6562"/>
<path d="M287 320 H322 V560 Q322 574 308 574 H287Z" fill="#c8743a"/>
<path d="M287 320 H316 V558 Q316 570 304 570 H287Z" fill="#6a3420"/>
<path d="M287 320 H309 V556 Q309 564 301 564 H287Z" fill="#eac686"/>
<path d="M287 451 H294 Q303 451 303 462 V504 Q303 515 294 515 H287Z" fill="#d86a10"/><path d="M287 454 H292 Q300 454 300 464 V500 Q300 510 292 510 H287Z" fill="#f28a20"/>
<path d="M287 149 H300 L300 322 H287Z" fill="#f0b828"/><path d="M287 195 Q295 180 300 160" fill="none" stroke="#5a3018" stroke-width="1.8"/><path d="M287 268 L300 268" stroke="#c87820" stroke-width="3"/>
<path d="M336 202 L352 215 L336 229Z" fill="#f4b820" stroke="#7a4a10" stroke-width="1.2" stroke-linejoin="round"/><path d="M337 206 L347 214 L337 216Z" fill="#ffe070"/><path d="M337 248 L340 266" stroke="#5a3018" stroke-width="2"/>
<rect x="578" y="149" width="527" height="487" fill="#d8884a"/>
<rect x="583" y="149" width="516" height="487" fill="#6a3420"/>
<rect x="590" y="149" width="504" height="487" fill="#ecc98c"/>
<path d="M616.5 149 H705.7 V176 Q705.7 180.5 701 180.5 H621 Q616.5 180.5 616.5 176Z" fill="#b26a38"/>
<path d="M707 149 H797.3 V176 Q797.3 180.5 793 180.5 H711 Q707 180.5 707 176Z" fill="#b26a38"/>
<rect x="615" y="176.5" width="428" height="1.5" fill="#f6dcc0" opacity="0.9"/>
<g filter="url(#b1)" fill="#5e3c26"><text x="633" y="171" font-family="Liberation Sans" font-size="21" font-weight="700">背包1</text><text x="722" y="171" font-family="Liberation Sans" font-size="21" font-weight="700">背包2</text></g>
<rect x="616" y="181" width="437" height="390" fill="#e8d2a6"/>
<g>
<rect x="619.5" y="182" width="79.4" height="74" rx="9" fill="#f0b848"/>
<rect x="622.7" y="185.2" width="73" height="67.6" rx="7" fill="#7d5534"/>
<rect x="622.7" y="185.2" width="73" height="67.6" rx="7" fill="none" stroke="#5e3c22" stroke-width="2" opacity="0.5"/>
<rect x="704.4" y="182" width="79.4" height="74" rx="9" fill="#f0b848"/>
<rect x="707.6" y="185.2" width="73" height="67.6" rx="7" fill="#7d5534"/>
<rect x="707.6" y="185.2" width="73" height="67.6" rx="7" fill="none" stroke="#5e3c22" stroke-width="2" opacity="0.5"/>
<rect x="789.3" y="182" width="79.4" height="74" rx="9" fill="#f0b848"/>
<rect x="792.5" y="185.2" width="73" height="67.6" rx="7" fill="#7d5534"/>
<rect x="792.5" y="185.2" width="73" height="67.6" rx="7" fill="none" stroke="#5e3c22" stroke-width="2" opacity="0.5"/>
<rect x="874.2" y="182" width="79.4" height="74" rx="9" fill="#f0b848"/>
<rect x="877.4" y="185.2" width="73" height="67.6" rx="7" fill="#7d5534"/>
<rect x="877.4" y="185.2" width="73" height="67.6" rx="7" fill="none" stroke="#5e3c22" stroke-width="2" opacity="0.5"/>
<rect x="959.1" y="182" width="79.4" height="74" rx="9" fill="#f0b848"/>
<rect x="962.3" y="185.2" width="73" height="67.6" rx="7" fill="#7d5534"/>
<rect x="962.3" y="185.2" width="73" height="67.6" rx="7" fill="none" stroke="#5e3c22" stroke-width="2" opacity="0.5"/>
<rect x="619.5" y="262.5" width="79.4" height="77.5" rx="9" fill="#f0b848"/>
<rect x="622.7" y="265.7" width="73" height="71.1" rx="7" fill="#7d5534"/>
<rect x="622.7" y="265.7" width="73" height="71.1" rx="7" fill="none" stroke="#5e3c22" stroke-width="2" opacity="0.5"/>
<rect x="704.4" y="262.5" width="79.4" height="77.5" rx="9" fill="#f0b848"/>
<rect x="707.6" y="265.7" width="73" height="71.1" rx="7" fill="#7d5534"/>
<rect x="707.6" y="265.7" width="73" height="71.1" rx="7" fill="none" stroke="#5e3c22" stroke-width="2" opacity="0.5"/>
<rect x="789.3" y="262.5" width="79.4" height="77.5" rx="9" fill="#f0b848"/>
<rect x="792.5" y="265.7" width="73" height="71.1" rx="7" fill="#7d5534"/>
<rect x="792.5" y="265.7" width="73" height="71.1" rx="7" fill="none" stroke="#5e3c22" stroke-width="2" opacity="0.5"/>
<rect x="874.2" y="262.5" width="79.4" height="77.5" rx="9" fill="#f0b848"/>
<rect x="877.4" y="265.7" width="73" height="71.1" rx="7" fill="#7d5534"/>
<rect x="877.4" y="265.7" width="73" height="71.1" rx="7" fill="none" stroke="#5e3c22" stroke-width="2" opacity="0.5"/>
<rect x="959.1" y="262.5" width="79.4" height="77.5" rx="9" fill="#f0b848"/>
<rect x="962.3" y="265.7" width="73" height="71.1" rx="7" fill="#7d5534"/>
<rect x="962.3" y="265.7" width="73" height="71.1" rx="7" fill="none" stroke="#5e3c22" stroke-width="2" opacity="0.5"/>
<rect x="619.5" y="347" width="79.4" height="77.5" rx="9" fill="#f0b848"/>
<rect x="622.7" y="350.2" width="73" height="71.1" rx="7" fill="#7d5534"/>
<rect x="622.7" y="350.2" width="73" height="71.1" rx="7" fill="none" stroke="#5e3c22" stroke-width="2" opacity="0.5"/>
<rect x="704.4" y="347" width="79.4" height="77.5" rx="9" fill="#f0b848"/>
<rect x="707.6" y="350.2" width="73" height="71.1" rx="7" fill="#7d5534"/>
<rect x="707.6" y="350.2" width="73" height="71.1" rx="7" fill="none" stroke="#5e3c22" stroke-width="2" opacity="0.5"/>
<rect x="789.3" y="347" width="79.4" height="77.5" rx="9" fill="#f0b848"/>
<rect x="792.5" y="350.2" width="73" height="71.1" rx="7" fill="#7d5534"/>
<rect x="792.5" y="350.2" width="73" height="71.1" rx="7" fill="none" stroke="#5e3c22" stroke-width="2" opacity="0.5"/>
<rect x="874.2" y="347" width="79.4" height="77.5" rx="9" fill="#f0b848"/>
<rect x="877.4" y="350.2" width="73" height="71.1" rx="7" fill="#7d5534"/>
<rect x="877.4" y="350.2" width="73" height="71.1" rx="7" fill="none" stroke="#5e3c22" stroke-width="2" opacity="0.5"/>
<rect x="959.1" y="347" width="79.4" height="77.5" rx="9" fill="#f0b848"/>
<rect x="962.3" y="350.2" width="73" height="71.1" rx="7" fill="#7d5534"/>
<rect x="962.3" y="350.2" width="73" height="71.1" rx="7" fill="none" stroke="#5e3c22" stroke-width="2" opacity="0.5"/>
<rect x="619.5" y="432" width="79.4" height="77.5" rx="9" fill="#f0b848"/>
<rect x="622.7" y="435.2" width="73" height="71.1" rx="7" fill="#7d5534"/>
<rect x="622.7" y="435.2" width="73" height="71.1" rx="7" fill="none" stroke="#5e3c22" stroke-width="2" opacity="0.5"/>
<rect x="704.4" y="432" width="79.4" height="77.5" rx="9" fill="#f0b848"/>
<rect x="707.6" y="435.2" width="73" height="71.1" rx="7" fill="#7d5534"/>
<rect x="707.6" y="435.2" width="73" height="71.1" rx="7" fill="none" stroke="#5e3c22" stroke-width="2" opacity="0.5"/>
<rect x="789.3" y="432" width="79.4" height="77.5" rx="9" fill="#f0b848"/>
<rect x="792.5" y="435.2" width="73" height="71.1" rx="7" fill="#7d5534"/>
<rect x="792.5" y="435.2" width="73" height="71.1" rx="7" fill="none" stroke="#5e3c22" stroke-width="2" opacity="0.5"/>
<rect x="874.2" y="432" width="79.4" height="77.5" rx="9" fill="#f0b848"/>
<rect x="877.4" y="435.2" width="73" height="71.1" rx="7" fill="#7d5534"/>
<rect x="877.4" y="435.2" width="73" height="71.1" rx="7" fill="none" stroke="#5e3c22" stroke-width="2" opacity="0.5"/>
<rect x="959.1" y="432" width="79.4" height="77.5" rx="9" fill="#f0b848"/>
<rect x="962.3" y="435.2" width="73" height="71.1" rx="7" fill="#7d5534"/>
<rect x="962.3" y="435.2" width="73" height="71.1" rx="7" fill="none" stroke="#5e3c22" stroke-width="2" opacity="0.5"/>
<rect x="619.5" y="517.4" width="79.4" height="60" rx="9" fill="#f0b848"/>
<rect x="622.7" y="520.6" width="73" height="53.6" rx="7" fill="#7d5534"/>
<rect x="622.7" y="520.6" width="73" height="53.6" rx="7" fill="none" stroke="#5e3c22" stroke-width="2" opacity="0.5"/>
<rect x="704.4" y="517.4" width="79.4" height="60" rx="9" fill="#f0b848"/>
<rect x="707.6" y="520.6" width="73" height="53.6" rx="7" fill="#7d5534"/>
<rect x="707.6" y="520.6" width="73" height="53.6" rx="7" fill="none" stroke="#5e3c22" stroke-width="2" opacity="0.5"/>
<rect x="789.3" y="517.4" width="79.4" height="60" rx="9" fill="#f0b848"/>
<rect x="792.5" y="520.6" width="73" height="53.6" rx="7" fill="#7d5534"/>
<rect x="792.5" y="520.6" width="73" height="53.6" rx="7" fill="none" stroke="#5e3c22" stroke-width="2" opacity="0.5"/>
<rect x="874.2" y="517.4" width="79.4" height="60" rx="9" fill="#f0b848"/>
<rect x="877.4" y="520.6" width="73" height="53.6" rx="7" fill="#7d5534"/>
<rect x="877.4" y="520.6" width="73" height="53.6" rx="7" fill="none" stroke="#5e3c22" stroke-width="2" opacity="0.5"/>
<rect x="959.1" y="517.4" width="79.4" height="60" rx="9" fill="#f0b848"/>
<rect x="962.3" y="520.6" width="73" height="53.6" rx="7" fill="#7d5534"/>
<rect x="962.3" y="520.6" width="73" height="53.6" rx="7" fill="none" stroke="#5e3c22" stroke-width="2" opacity="0.5"/>
</g>
<rect x="616" y="571" width="478" height="65" fill="#ecc98c"/><rect x="590" y="571.5" width="504" height="1.5" fill="#f8e2c2"/>
<rect x="1053" y="183" width="16" height="388" fill="#caa27e"/>
<rect x="1053" y="183" width="16" height="190" fill="#8e4a38"/>
<rect x="1042" y="177" width="1" height="394" fill="#fff4e0" opacity="0.8"/>
<path d="M606 596 H879 Q885 596 885 602 V636 H606Z" fill="#a4643a"/>
<circle cx="628" cy="619" r="17" fill="#a8501a"/><circle cx="628" cy="619" r="14.5" fill="url(#gcoin)"/>
<text x="659" y="630" font-family="Liberation Sans" font-size="24" font-weight="700" fill="#5a4636" filter="url(#b1)">99999999</text>
<path d="M934 636 V605 Q934 593 946 593 H1064 Q1076 593 1076 605 V636Z" fill="#d06a10"/>
<path d="M936 636 V606 Q936 595 947 595 H1063 Q1074 595 1074 606 V636Z" fill="url(#gbtn)"/>
<path d="M946 636 V612 Q946 603 955 603 H1055 Q1064 603 1064 612 V636" fill="none" stroke="#f8c060" stroke-width="1.2" opacity="0.7"/>
<text x="975" y="632" font-family="Liberation Sans" font-size="27" font-weight="700" fill="#6a4020" filter="url(#b1)">整理</text>
<rect x="287" y="149" width="1219" height="487" fill="url(#mgrid)" opacity="0.045"/>
<g opacity="0.55"><rect x="287" y="349.5" width="1219" height="1.2" fill="#808080"/><rect x="287" y="570.5" width="1219" height="1" fill="#909090"/>
<rect x="455" y="149" width="1" height="487" fill="#808080"/><rect x="675" y="149" width="1" height="487" fill="#808080"/><rect x="894" y="149" width="1" height="487" fill="#808080"/><rect x="1114" y="149" width="1" height="487" fill="#606060"/><rect x="1334" y="149" width="1" height="487" fill="#707070"/></g>
<rect x="1341.5" y="149" width="1.2" height="487" fill="#f0f8e8" opacity="0.9"/><rect x="1365" y="149" width="1.5" height="487" fill="#f8fff0"/>
<rect x="615" y="177" width="1" height="459" fill="#f8f0e0" opacity="0.7"/>
<circle cx="615" cy="177.5" r="5.8" fill="#2d7fe6" stroke="#1a3050" stroke-width="1"/>
<circle cx="1042" cy="177.5" r="5.8" fill="#2d7fe6" stroke="#1a3050" stroke-width="1"/>
<g fill="none" stroke="#fffef0" stroke-width="1.3" stroke-dasharray="2.2 1.2" opacity="0.95"><path d="M614 176 L601 174.5 L607.5 168Z"/><path d="M614 179 L601 189 L607.5 196.5Z"/><path d="M1055.5 180 L1062.7 168.2 L1070.6 175.6Z"/><path d="M1055.5 180 L1061.6 195.4 L1070.6 189Z"/></g>
<circle cx="829" cy="571" r="5" fill="none" stroke="#7888a0" stroke-width="2"/>
<rect x="290" y="152" width="48" height="180" rx="5" fill="#1d2618" opacity="0.92"/>
<path d="M303 161 H325 M303 164.5 H325" stroke="#8a8a8a" stroke-width="1"/>
<rect x="294" y="174" width="40" height="25" rx="2" fill="#555555"/>
<rect x="294" y="200" width="40" height="25" rx="2" fill="#555555"/>
<rect x="294" y="226" width="40" height="25" rx="2" fill="#555555"/>
<rect x="294" y="252" width="40" height="25" rx="2" fill="#555555"/>
<rect x="294" y="278" width="40" height="25" rx="2" fill="#3f5f86"/>
<rect x="294" y="304" width="40" height="25" rx="2" fill="#555555"/>
<path d="M308 193 Q306 186 305 181 Q305 179 307 180 L309 185 L309 178 Q310 176 311.5 178 L312 184 L312.5 177 Q314 175.5 315 177.5 L315.5 184 L316.5 179 Q318 177.5 318.5 180 L318 189 Q317 194 313 195 Q309 195 308 193Z" fill="#d8d8d8"/>
<path d="M314 201 V222 M303.5 212 H324.5 M311 204 L314 201 L317 204 M311 219 L314 222 L317 219 M306.5 209 L303.5 212 L306.5 215 M321.5 209 L324.5 212 L321.5 215" fill="none" stroke="#d0d0d0" stroke-width="1.1"/>
<path d="M321 232 A8.5 8.5 0 0 0 306 236 M307 244 A8.5 8.5 0 0 0 322 240 M306 232 L306 236.5 L310 236 M322 244 L322 239.5 L318 240" fill="none" stroke="#d0d0d0" stroke-width="1.1"/>
<path d="M305 264 V256 H322 V273 H314 M305 264 H314 V273 H305Z M311 267 L319 259 M315 259 H319 V263" fill="none" stroke="#d0d0d0" stroke-width="1.1"/>
<path d="M306 283 V297 M322 283 V297 M307 282 H321 M307 298 H321" stroke="#f0f0f0" stroke-width="1.3"/><g fill="#f8f8f8"><rect x="304" y="280" width="4" height="4"/><rect x="320" y="280" width="4" height="4"/><rect x="304" y="296" width="4" height="4"/><rect x="320" y="296" width="4" height="4"/></g>
<circle cx="314" cy="316" r="8" fill="none" stroke="#c8c8c8" stroke-width="1.2"/><path d="M314 310 V322 M308 316 H320" stroke="#c8c8c8" stroke-width="1.1"/><path d="M304 325 L304 321 M304 325 L308 325 M324 307 L324 311 M324 307 L320 307" stroke="#c8c8c8" stroke-width="1.2"/>
<rect x="1238" y="381" width="133" height="116" rx="4" fill="#0c160a" opacity="0.94"/>
<path d="M1245 389 H1265 M1245 392.5 H1265" stroke="#8a8a8a" stroke-width="1"/>
<text x="1272" y="396" font-family="Liberation Sans" font-size="15" letter-spacing="0.5" fill="#9a9a9a">AI Navigation</text>
<path d="M1250 406 L1258 412 L1250 418Z" fill="#7a7a7a"/>
<text x="1267" y="417.5" font-family="Liberation Sans" font-size="15" letter-spacing="0.5" fill="#d4d4d4">Surfaces</text>
<path d="M1250 437 L1258 443 L1250 449Z" fill="#7a7a7a"/>
<text x="1267" y="448.5" font-family="Liberation Sans" font-size="15" letter-spacing="0.5" fill="#d4d4d4">Agents</text>
<path d="M1250 468 L1258 474 L1250 480Z" fill="#7a7a7a"/>
<text x="1267" y="479.5" font-family="Liberation Sans" font-size="15" letter-spacing="0.5" fill="#d4d4d4">Obstacles</text>
</svg>

<!-- INSPECTOR -->
<div class="a" style="left:1509px;top:92px;width:411px;height:793px;background:#383838;overflow:hidden">
<div class="a" style="left:0px;top:0px;width:411px;height:24px;background:#282828;"></div>
<div class="a" style="left:0px;top:0px;width:119px;height:24px;background:#3c3c3c;border-radius:3px 3px 0 0"></div>
<svg style="left:12px;top:6px" width="13" height="13" viewBox="0 0 13 13"><circle cx="6.5" cy="6.5" r="6.3" fill="#c8c8c8"/><rect x="5.5" y="5.5" width="2" height="5" fill="#3c3c3c"/><circle cx="6.5" cy="3.6" r="1.1" fill="#3c3c3c"/></svg>
<div class="t" style="left:30px;top:3px;font-size:15px;font-weight:400;letter-spacing:0.55px;color:#d2d2d2">Inspector</div>
<svg style="left:129px;top:5px" width="14" height="14" viewBox="0 0 14 14"><path d="M0.5 0.5 L5 0.5 L0.5 5Z M13.5 0.5 L9 0.5 L13.5 5Z M0.5 13.5 L5 13.5 L0.5 9Z M13.5 13.5 L9 13.5 L13.5 9Z M3 3 L11 11 M11 3 L3 11" fill="#b8b8b8" stroke="#b8b8b8" stroke-width="1.3"/><rect x="4" y="4" width="6" height="6" fill="#8a8a8a"/></svg>
<div class="t" style="left:149px;top:3px;font-size:15px;font-weight:400;letter-spacing:0.55px;color:#c8c8c8">Navigation (Obsolete)</div>
<svg style="left:368px;top:5px" width="12" height="14" viewBox="0 0 12 14"><rect x="1.6" y="6.6" width="8.8" height="5.6" fill="none" stroke="#c8c8c8" stroke-width="1.2"/><path d="M2.6 2.6 Q2.6 0.8 4.6 0.8 H7.6 Q9.4 0.8 9.4 2.8 V6.6" fill="none" stroke="#c8c8c8" stroke-width="1.2"/></svg>
<svg style="left:391px;top:5px" width="4" height="14" viewBox="0 0 4 14"><circle cx="2" cy="2" r="1.6" fill="#c4c4c4"/><circle cx="2" cy="7" r="1.6" fill="#c4c4c4"/><circle cx="2" cy="12" r="1.6" fill="#c4c4c4"/></svg>
<div class="a" style="left:0px;top:24px;width:411px;height:74px;background:#3e3e3e;"></div>
<svg style="left:8px;top:36px" width="26" height="28" viewBox="0 0 26 28"><path d="M13 0.5 L25.5 6.8 L25.5 20.5 L13 27.3 L0.5 20.5 L0.5 6.8Z" fill="#5ec8f2"/><path d="M0.5 6.8 L13 13 L25.5 6.8 L13 0.5Z" fill="#8fe0ff"/><path d="M13 13 V27.3" stroke="#3aa0d0" stroke-width="1"/></svg>
<div class="tri" style="left:34px;top:63px;border-left-width:5px;border-right-width:5px;border-top-width:6px"></div>
<div class="a" style="left:59px;top:38px;width:17px;height:18px;background:#2a2a2a;border:1px solid #202020;border-radius:3px"></div>
<svg style="left:62px;top:42px" width="11" height="10" viewBox="0 0 11 10"><path d="M1 5 L4 8.5 L10 1.5" fill="none" stroke="#f0f0f0" stroke-width="1.8"/></svg>
<div class="a" style="left:84px;top:35px;width:225px;height:22px;background:#2a2a2a;border:1px solid #202020;border-radius:4px"></div>
<div class="t" style="left:88px;top:37px;font-size:15px;font-weight:700;letter-spacing:0px;color:#e4e4e4">Content</div>
<div class="a" style="left:314px;top:38px;width:17px;height:18px;background:#2a2a2a;border:1px solid #202020;border-radius:3px"></div>
<div class="t" style="left:336px;top:37px;font-size:15px;font-weight:400;letter-spacing:0.55px;color:#c8c8c8">Static</div>
<div class="tri" style="left:394px;top:44px;border-left-width:5px;border-right-width:5px;border-top-width:6px"></div>
<div class="t" style="left:51px;top:68px;font-size:15px;font-weight:400;letter-spacing:0.55px;color:#c8c8c8">Tag</div>
<div class="a" style="left:84px;top:66px;width:135px;height:21px;background:#515151;border-radius:3px;box-shadow:0 1px 0 #2a2a2a"></div>
<div class="t" style="left:88px;top:65.5px;font-size:15px;font-weight:400;letter-spacing:0.55px;color:#d2d2d2">Untagged</div>
<div class="tri" style="left:203px;top:73.5px;border-left-width:5px;border-right-width:5px;border-top-width:6px"></div>
<div class="t" style="left:236px;top:68px;font-size:15px;font-weight:400;letter-spacing:0.55px;color:#c8c8c8">Layer</div>
<div class="a" style="left:283px;top:66px;width:122px;height:21px;background:#515151;border-radius:3px;box-shadow:0 1px 0 #2a2a2a"></div>
<div class="t" style="left:287px;top:65.5px;font-size:15px;font-weight:400;letter-spacing:0.55px;color:#d2d2d2">UI</div>
<div class="tri" style="left:389px;top:73.5px;border-left-width:5px;border-right-width:5px;border-top-width:6px"></div>
<div class="a" style="left:0px;top:97px;width:411px;height:1px;background:#262626;"></div>
<div class="a" style="left:0px;top:98px;width:411px;height:27px;background:#3e3e3e;"></div>
<div class="a" style="left:0px;top:124px;width:411px;height:1px;background:#2c2c2c;"></div>
<div class="trid" style="left:8px;top:107px;border-left-width:5px;border-right-width:5px;border-top-width:9px"></div>
<svg style="left:27px;top:103px" width="16" height="17" viewBox="0 0 16 17"><g fill="#d0d0d0"><path d="M0.5 0.5 L6.5 2 L5.5 4.5 L3.5 6.5 L1.5 5.5Z"/><path d="M15.5 0.5 L9.5 2 L10.5 4.5 L12.5 6.5 L14.5 5.5Z"/><path d="M0.5 16.5 L6.5 15 L5.5 12.5 L3.5 10.5 L1.5 11.5Z"/><path d="M15.5 16.5 L9.5 15 L10.5 12.5 L12.5 10.5 L14.5 11.5Z"/></g></svg>
<div class="t" style="left:75px;top:103px;font-size:15px;font-weight:700;letter-spacing:0px;color:#dcdcdc">Rect Transform</div>
<svg style="left:338px;top:105px" width="14" height="14" viewBox="0 0 14 14"><circle cx="7" cy="7" r="6.8" fill="#c8c8c8"/><path d="M4.8 5.3 Q4.8 2.9 7 2.9 Q9.3 2.9 9.3 5 Q9.3 6.3 7.8 7 Q7 7.4 7 8.6" fill="none" stroke="#383838" stroke-width="1.8"/><circle cx="7" cy="11" r="1.1" fill="#383838"/></svg>
<svg style="left:363px;top:105px" width="14" height="14" viewBox="0 0 14 14"><path d="M0 4.5 H14 M0 9.5 H14 M9 1 V8 M5 6 V13" stroke="#c4c4c4" stroke-width="1.5"/></svg>
<svg style="left:394px;top:105px" width="4" height="14" viewBox="0 0 4 14"><circle cx="2" cy="2" r="1.6" fill="#c4c4c4"/><circle cx="2" cy="7" r="1.6" fill="#c4c4c4"/><circle cx="2" cy="12" r="1.6" fill="#c4c4c4"/></svg>
<div class="a" style="left:0px;top:134px;width:2px;height:45px;background:#2c82c0;"></div>
<div class="t" style="left:31px;top:136px;font-size:13px;font-weight:400;letter-spacing:0.6px;color:#c8c8c8">stretch</div>
<div class="t" style="left:8px;top:175px;width:20px;height:20px;font-size:13px;letter-spacing:0.6px;color:#c8c8c8;transform:rotate(-90deg);transform-origin:10px 10px;line-height:20px;text-align:center;">top</div>
<div class="a" style="left:34px;top:161px;width:44px;height:44px;background:transparent;border:1px solid #8a8a8a"></div>
<div class="a" style="left:34px;top:160px;width:44px;height:2px;background:#d4604c;"></div>
<div class="a" style="left:32px;top:159px;width:4px;height:5px;background:#e0c040;"></div>
<div class="a" style="left:76px;top:159px;width:4px;height:5px;background:#e0c040;"></div>
<div class="a" style="left:45px;top:172px;width:21px;height:21px;background:transparent;border:1px solid #a0a0a0"></div>
<svg style="left:47px;top:179px" width="18" height="9" viewBox="0 0 18 9"><path d="M1 4.5 H17 M1 1 V8 M4 1.5 V7.5 M14 1.5 L17 4.5 L14 7.5Z" fill="#29a0e0" stroke="#29a0e0" stroke-width="1.3"/></svg>
<div class="t" style="left:168px;top:136px;font-size:15px;font-weight:400;letter-spacing:0.55px;color:#c8c8c8">Left</div>
<div class="t" style="left:249px;top:136px;font-size:15px;font-weight:700;letter-spacing:0px;color:#e0e0e0">Pos Y</div>
<div class="t" style="left:329px;top:136px;font-size:15px;font-weight:400;letter-spacing:0.55px;color:#c8c8c8">Pos Z</div>
<div class="a" style="left:167px;top:156px;width:77px;height:23px;background:#2a2a2a;border:1px solid #212121;border-radius:3px;overflow:hidden"></div>
<div class="t" style="left:171px;top:159.0px;width:71px;overflow:hidden;font-size:15px;font-weight:400;letter-spacing:0.5px;color:#d8d8d8">6.614017e</div>
<div class="a" style="left:248px;top:156px;width:77px;height:23px;background:#2a2a2a;border:1px solid #212121;border-radius:3px;overflow:hidden"></div>
<div class="t" style="left:252px;top:159.0px;width:71px;overflow:hidden;font-size:15px;font-weight:700;letter-spacing:0px;color:#d8d8d8">6.196086</div>
<div class="a" style="left:329px;top:156px;width:77px;height:23px;background:#2a2a2a;border:1px solid #212121;border-radius:3px;overflow:hidden"></div>
<div class="t" style="left:333px;top:159.0px;width:71px;overflow:hidden;font-size:15px;font-weight:400;letter-spacing:0.5px;color:#d8d8d8">0</div>
<div class="t" style="left:168px;top:181px;font-size:15px;font-weight:400;letter-spacing:0.55px;color:#c8c8c8">Right</div>
<div class="t" style="left:249px;top:181px;font-size:15px;font-weight:400;letter-spacing:0.55px;color:#c8c8c8">Height</div>
<div class="a" style="left:167px;top:201px;width:77px;height:23px;background:#2a2a2a;border:1px solid #212121;border-radius:3px;overflow:hidden"></div>
<div class="t" style="left:171px;top:204.0px;width:71px;overflow:hidden;font-size:15px;font-weight:400;letter-spacing:0.5px;color:#d8d8d8">16.03793</div>
<div class="a" style="left:248px;top:201px;width:77px;height:23px;background:#2a2a2a;border:1px solid #212121;border-radius:3px;overflow:hidden"></div>
<div class="t" style="left:252px;top:204.0px;width:71px;overflow:hidden;font-size:15px;font-weight:400;letter-spacing:0.5px;color:#d8d8d8">979.432</div>
<div class="a" style="left:342px;top:200px;width:29px;height:23px;background:#555555;border-radius:3px 0 0 3px"></div>
<div class="a" style="left:372px;top:200px;width:33px;height:23px;background:#555555;border-radius:0 3px 3px 0"></div>
<svg style="left:349px;top:205px" width="14" height="14" viewBox="0 0 14 14"><rect x="0.7" y="0.7" width="12.6" height="12.6" fill="none" stroke="#8a8a8a" stroke-width="1.4" stroke-dasharray="2.5 1.8"/></svg>
<div class="t" style="left:382px;top:202px;font-size:15px;font-weight:400;letter-spacing:0px;color:#8a8a8a">R</div>
<div class="trid" style="left:8px;top:233px;border-left-width:5px;border-right-width:5px;border-top-width:9px"></div>
<div class="t" style="left:24px;top:228px;font-size:15px;font-weight:400;letter-spacing:0.55px;color:#c8c8c8">Anchors</div>
<div class="t" style="left:42px;top:251px;font-size:15px;font-weight:400;letter-spacing:0.55px;color:#c8c8c8">Min</div>
<div class="t" style="left:168px;top:251px;font-size:15px;font-weight:400;letter-spacing:0.55px;color:#c8c8c8">X</div>
<div class="a" style="left:182px;top:249px;width:62px;height:23px;background:#2a2a2a;border:1px solid #212121;border-radius:3px;overflow:hidden"></div>
<div class="t" style="left:186px;top:252.0px;width:56px;overflow:hidden;font-size:15px;font-weight:400;letter-spacing:0.5px;color:#d8d8d8">0</div>
<div class="t" style="left:249px;top:251px;font-size:15px;font-weight:400;letter-spacing:0.55px;color:#c8c8c8">Y</div>
<div class="a" style="left:263px;top:249px;width:62px;height:23px;background:#2a2a2a;border:1px solid #212121;border-radius:3px;overflow:hidden"></div>
<div class="t" style="left:267px;top:252.0px;width:56px;overflow:hidden;font-size:15px;font-weight:400;letter-spacing:0.5px;color:#d8d8d8">1</div>
<div class="t" style="left:42px;top:276px;font-size:15px;font-weight:400;letter-spacing:0.55px;color:#c8c8c8">Max</div>
<div class="t" style="left:168px;top:276px;font-size:15px;font-weight:400;letter-spacing:0.55px;color:#c8c8c8">X</div>
<div class="a" style="left:182px;top:274px;width:62px;height:23px;background:#2a2a2a;border:1px solid #212121;border-radius:3px;overflow:hidden"></div>
<div class="t" style="left:186px;top:277.0px;width:56px;overflow:hidden;font-size:15px;font-weight:400;letter-spacing:0.5px;color:#d8d8d8">1</div>
<div class="t" style="left:249px;top:276px;font-size:15px;font-weight:400;letter-spacing:0.55px;color:#c8c8c8">Y</div>
<div class="a" style="left:263px;top:274px;width:62px;height:23px;background:#2a2a2a;border:1px solid #212121;border-radius:3px;overflow:hidden"></div>
<div class="t" style="left:267px;top:277.0px;width:56px;overflow:hidden;font-size:15px;font-weight:400;letter-spacing:0.5px;color:#d8d8d8">1</div>
<div class="t" style="left:24px;top:303px;font-size:15px;font-weight:400;letter-spacing:0.55px;color:#c8c8c8">Pivot</div>
<div class="t" style="left:168px;top:303px;font-size:15px;font-weight:400;letter-spacing:0.55px;color:#c8c8c8">X</div>
<div class="a" style="left:182px;top:301px;width:62px;height:23px;background:#2a2a2a;border:1px solid #212121;border-radius:3px;overflow:hidden"></div>
<div class="t" style="left:186px;top:304.0px;width:56px;overflow:hidden;font-size:15px;font-weight:400;letter-spacing:0.5px;color:#d8d8d8">0</div>
<div class="t" style="left:249px;top:303px;font-size:15px;font-weight:400;letter-spacing:0.55px;color:#c8c8c8">Y</div>
<div class="a" style="left:263px;top:301px;width:62px;height:23px;background:#2a2a2a;border:1px solid #212121;border-radius:3px;overflow:hidden"></div>
<div class="t" style="left:267px;top:304.0px;width:56px;overflow:hidden;font-size:15px;font-weight:400;letter-spacing:0.5px;color:#d8d8d8">1</div>
<div class="t" style="left:24px;top:338px;font-size:15px;font-weight:400;letter-spacing:0.55px;color:#c8c8c8">Rotation</div>
<div class="t" style="left:172px;top:338px;font-size:15px;font-weight:400;letter-spacing:0.55px;color:#c8c8c8">X</div>
<div class="a" style="left:190px;top:336px;width:56px;height:22px;background:#2a2a2a;border:1px solid #212121;border-radius:3px;overflow:hidden"></div>
<div class="t" style="left:194px;top:338.5px;width:50px;overflow:hidden;font-size:15px;font-weight:400;letter-spacing:0.5px;color:#d8d8d8">0</div>
<div class="t" style="left:252px;top:338px;font-size:15px;font-weight:400;letter-spacing:0.55px;color:#c8c8c8">Y</div>
<div class="a" style="left:270px;top:336px;width:56px;height:22px;background:#2a2a2a;border:1px solid #212121;border-radius:3px;overflow:hidden"></div>
<div class="t" style="left:274px;top:338.5px;width:50px;overflow:hidden;font-size:15px;font-weight:400;letter-spacing:0.5px;color:#d8d8d8">0</div>
<div class="t" style="left:332px;top:338px;font-size:15px;font-weight:400;letter-spacing:0.55px;color:#c8c8c8">Z</div>
<div class="a" style="left:350px;top:336px;width:56px;height:22px;background:#2a2a2a;border:1px solid #212121;border-radius:3px;overflow:hidden"></div>
<div class="t" style="left:354px;top:338.5px;width:50px;overflow:hidden;font-size:15px;font-weight:400;letter-spacing:0.5px;color:#d8d8d8">0</div>
<div class="t" style="left:24px;top:363px;font-size:15px;font-weight:400;letter-spacing:0.55px;color:#c8c8c8">Scale</div>
<svg style="left:144px;top:365px" width="17" height="13" viewBox="0 0 17 13"><path d="M6 3 H3.5 Q0.8 3 0.8 6.5 Q0.8 10 3.5 10 H6 M11 3 H13.5 Q16.2 3 16.2 6.5 Q16.2 10 13.5 10 H11 M2 0.5 L15 12.5" fill="none" stroke="#c0c0c0" stroke-width="1.4"/></svg>
<div class="t" style="left:172px;top:363px;font-size:15px;font-weight:400;letter-spacing:0.55px;color:#c8c8c8">X</div>
<div class="a" style="left:190px;top:361px;width:56px;height:22px;background:#2a2a2a;border:1px solid #212121;border-radius:3px;overflow:hidden"></div>
<div class="t" style="left:194px;top:363.5px;width:50px;overflow:hidden;font-size:15px;font-weight:400;letter-spacing:0.5px;color:#d8d8d8">1</div>
<div class="t" style="left:252px;top:363px;font-size:15px;font-weight:400;letter-spacing:0.55px;color:#c8c8c8">Y</div>
<div class="a" style="left:270px;top:361px;width:56px;height:22px;background:#2a2a2a;border:1px solid #212121;border-radius:3px;overflow:hidden"></div>
<div class="t" style="left:274px;top:363.5px;width:50px;overflow:hidden;font-size:15px;font-weight:400;letter-spacing:0.5px;color:#d8d8d8">1</div>
<div class="t" style="left:332px;top:363px;font-size:15px;font-weight:400;letter-spacing:0.55px;color:#c8c8c8">Z</div>
<div class="a" style="left:350px;top:361px;width:56px;height:22px;background:#2a2a2a;border:1px solid #212121;border-radius:3px;overflow:hidden"></div>
<div class="t" style="left:354px;top:363.5px;width:50px;overflow:hidden;font-size:15px;font-weight:400;letter-spacing:0.5px;color:#d8d8d8">1</div>
<div class="a" style="left:0px;top:395px;width:411px;height:1px;background:#262626;"></div>
<div class="a" style="left:0px;top:396px;width:411px;height:27px;background:#3e3e3e;"></div>
<div class="a" style="left:0px;top:422px;width:411px;height:1px;background:#2c2c2c;"></div>
<div class="trid" style="left:8px;top:405px;border-left-width:5px;border-right-width:5px;border-top-width:9px"></div>
<svg style="left:26px;top:401px" width="19" height="19" viewBox="0 0 19 19"><rect x="0.7" y="0.7" width="13.6" height="14" rx="2" fill="none" stroke="#b8b8b8" stroke-width="1.3"/><rect x="3" y="3" width="4" height="4" fill="#c8c8c8"/><rect x="8.5" y="3" width="4" height="4" fill="#c8c8c8"/><rect x="3" y="8.5" width="4" height="4" fill="#c8c8c8"/><circle cx="13" cy="13" r="5.2" fill="#1aa84a"/><path d="M13 10 V16 M10 13 H16" stroke="#e8ffe8" stroke-width="1.4"/></svg>
<div class="a" style="left:50px;top:400px;width:17px;height:18px;background:#2a2a2a;border:1px solid #202020;border-radius:3px"></div>
<svg style="left:53px;top:404px" width="11" height="10" viewBox="0 0 11 10"><path d="M1 5 L4 8.5 L10 1.5" fill="none" stroke="#f0f0f0" stroke-width="1.8"/></svg>
<div class="t" style="left:75px;top:400px;font-size:15px;font-weight:700;letter-spacing:0px;color:#dcdcdc">Grid Layout Group</div>
<svg style="left:338px;top:402px" width="14" height="14" viewBox="0 0 14 14"><circle cx="7" cy="7" r="6.8" fill="#c8c8c8"/><path d="M4.8 5.3 Q4.8 2.9 7 2.9 Q9.3 2.9 9.3 5 Q9.3 6.3 7.8 7 Q7 7.4 7 8.6" fill="none" stroke="#383838" stroke-width="1.8"/><circle cx="7" cy="11" r="1.1" fill="#383838"/></svg>
<svg style="left:363px;top:402px" width="14" height="14" viewBox="0 0 14 14"><path d="M0 4.5 H14 M0 9.5 H14 M9 1 V8 M5 6 V13" stroke="#c4c4c4" stroke-width="1.5"/></svg>
<svg style="left:394px;top:402px" width="4" height="14" viewBox="0 0 4 14"><circle cx="2" cy="2" r="1.6" fill="#c4c4c4"/><circle cx="2" cy="7" r="1.6" fill="#c4c4c4"/><circle cx="2" cy="12" r="1.6" fill="#c4c4c4"/></svg>
<div class="a" style="left:0px;top:396px;width:2px;height:261px;background:#2c82c0;"></div>
<div class="trir" style="left:10px;top:435px;border-top-width:4.5px;border-bottom-width:4.5px;border-left-width:8px"></div>
<div class="t" style="left:24px;top:430px;font-size:15px;font-weight:400;letter-spacing:0.55px;color:#c8c8c8">Padding</div>
<div class="t" style="left:24px;top:455px;font-size:15px;font-weight:400;letter-spacing:0.55px;color:#c8c8c8">Cell Size</div>
<div class="t" style="left:42px;top:480px;font-size:15px;font-weight:400;letter-spacing:0.55px;color:#c8c8c8">X</div>
<div class="a" style="left:60px;top:478px;width:161px;height:23px;background:#2a2a2a;border:1px solid #212121;border-radius:3px;overflow:hidden"></div>
<div class="t" style="left:64px;top:481.0px;width:155px;overflow:hidden;font-size:15px;font-weight:400;letter-spacing:0.5px;color:#d8d8d8">100</div>
<div class="t" style="left:228px;top:480px;font-size:15px;font-weight:400;letter-spacing:0.55px;color:#c8c8c8">Y</div>
<div class="a" style="left:245px;top:478px;width:161px;height:23px;background:#2a2a2a;border:1px solid #212121;border-radius:3px;overflow:hidden"></div>
<div class="t" style="left:249px;top:481.0px;width:155px;overflow:hidden;font-size:15px;font-weight:400;letter-spacing:0.5px;color:#d8d8d8">100</div>
<div class="t" style="left:24px;top:505px;font-size:15px;font-weight:400;letter-spacing:0.55px;color:#c8c8c8">Spacing</div>
<div class="t" style="left:42px;top:530px;font-size:15px;font-weight:400;letter-spacing:0.55px;color:#c8c8c8">X</div>
<div class="a" style="left:60px;top:528px;width:161px;height:23px;background:#2a2a2a;border:1px solid #212121;border-radius:3px;overflow:hidden"></div>
<div class="t" style="left:64px;top:531.0px;width:155px;overflow:hidden;font-size:15px;font-weight:400;letter-spacing:0.5px;color:#d8d8d8">5</div>
<div class="t" style="left:228px;top:530px;font-size:15px;font-weight:400;letter-spacing:0.55px;color:#c8c8c8">Y</div>
<div class="a" style="left:245px;top:528px;width:161px;height:23px;background:#2a2a2a;border:1px solid #212121;border-radius:3px;overflow:hidden"></div>
<div class="t" style="left:249px;top:531.0px;width:155px;overflow:hidden;font-size:15px;font-weight:400;letter-spacing:0.5px;color:#d8d8d8">5</div>
<div class="t" style="left:24px;top:555px;font-size:15px;font-weight:400;letter-spacing:0.55px;color:#c8c8c8">Start Corner</div>
<div class="a" style="left:176px;top:554px;width:229px;height:21px;background:#515151;border-radius:3px;box-shadow:0 1px 0 #2a2a2a"></div>
<div class="t" style="left:180px;top:553.5px;font-size:15px;font-weight:400;letter-spacing:0.55px;color:#d2d2d2">Upper Left</div>
<div class="tri" style="left:389px;top:561.5px;border-left-width:5px;border-right-width:5px;border-top-width:6px"></div>
<div class="t" style="left:24px;top:580px;font-size:15px;font-weight:400;letter-spacing:0.55px;color:#c8c8c8">Start Axis</div>
<div class="a" style="left:176px;top:579px;width:229px;height:21px;background:#515151;border-radius:3px;box-shadow:0 1px 0 #2a2a2a"></div>
<div class="t" style="left:180px;top:578.5px;font-size:15px;font-weight:400;letter-spacing:0.55px;color:#d2d2d2">Horizontal</div>
<div class="tri" style="left:389px;top:586.5px;border-left-width:5px;border-right-width:5px;border-top-width:6px"></div>
<div class="t" style="left:24px;top:605px;font-size:15px;font-weight:400;letter-spacing:0.55px;color:#c8c8c8">Child Alignment</div>
<div class="a" style="left:176px;top:604px;width:229px;height:21px;background:#515151;border-radius:3px;box-shadow:0 1px 0 #2a2a2a"></div>
<div class="t" style="left:180px;top:603.5px;font-size:15px;font-weight:400;letter-spacing:0.55px;color:#d2d2d2">Upper Center</div>
<div class="tri" style="left:389px;top:611.5px;border-left-width:5px;border-right-width:5px;border-top-width:6px"></div>
<div class="t" style="left:24px;top:630px;font-size:15px;font-weight:400;letter-spacing:0.55px;color:#c8c8c8">Constraint</div>
<div class="a" style="left:176px;top:629px;width:229px;height:21px;background:#515151;border-radius:3px;box-shadow:0 1px 0 #2a2a2a"></div>
<div class="t" style="left:180px;top:628.5px;font-size:15px;font-weight:400;letter-spacing:0.55px;color:#d2d2d2">Flexible</div>
<div class="tri" style="left:389px;top:636.5px;border-left-width:5px;border-right-width:5px;border-top-width:6px"></div>
<div class="a" style="left:0px;top:663px;width:411px;height:1px;background:#262626;"></div>
<div class="a" style="left:62px;top:675px;width:285px;height:28px;background:#585858;border-radius:4px;box-shadow:0 1px 0 #252525"></div>
<div class="t" style="left:148px;top:680px;font-size:15px;font-weight:400;letter-spacing:0.42px;color:#dedede">Add Component</div>
</div>

<!-- PROJECT -->
<div class="a" style="left:0px;top:637px;width:1920px;height:1px;background:#191919;"></div>
<div class="a" style="left:0px;top:638px;width:1005px;height:247px;background:#383838;"></div>
<div class="a" style="left:0px;top:638px;width:1005px;height:24px;background:#282828;"></div>
<div class="a" style="left:0px;top:638px;width:102px;height:24px;background:#3c3c3c;border-radius:3px 3px 0 0"></div>
<svg style="left:9px;top:645px" width="14" height="13" viewBox="0 0 14 13"><path d="M0 0.5 H5 L6.5 2.5 H14 V13 H0Z" fill="#c4c4c4"/></svg>
<div class="t" style="left:28px;top:641px;font-size:15px;font-weight:400;letter-spacing:0.55px;color:#d2d2d2">Project</div>
<svg style="left:112px;top:644px" width="15" height="15" viewBox="0 0 15 15"><circle cx="7.5" cy="7.5" r="7.2" fill="#c4c4c4"/><path d="M7.5 3 V7.8 H11" fill="none" stroke="#282828" stroke-width="1.8"/></svg>
<div class="t" style="left:132px;top:641px;font-size:15px;font-weight:400;letter-spacing:0.55px;color:#c8c8c8">Animation</div>
<svg style="left:235px;top:643px" width="18" height="18" viewBox="0 0 18 18"><rect x="2" y="2" width="13" height="13" fill="none" stroke="#9a7ae8" stroke-width="1.3"/><g fill="#9a7ae8"><rect x="0" y="0" width="4" height="4"/><rect x="14" y="0" width="4" height="4"/><rect x="0" y="14" width="4" height="4"/><rect x="14" y="14" width="4" height="4"/></g><path d="M5 13 L6 9.5 L12 3.5 L14.5 6 L8.5 12Z" fill="#c8c8c8"/></svg>
<div class="t" style="left:256px;top:641px;font-size:15px;font-weight:400;letter-spacing:0.55px;color:#c8c8c8">Sprite Editor</div>
<svg style="left:961px;top:644px" width="12" height="14" viewBox="0 0 12 14"><rect x="1.6" y="6.6" width="8.8" height="5.6" fill="none" stroke="#c8c8c8" stroke-width="1.2"/><path d="M2.6 2.6 Q2.6 0.8 4.6 0.8 H7.6 Q9.4 0.8 9.4 2.8 V6.6" fill="none" stroke="#c8c8c8" stroke-width="1.2"/></svg>
<svg style="left:986px;top:644px" width="4" height="14" viewBox="0 0 4 14"><circle cx="2" cy="2" r="1.6" fill="#c4c4c4"/><circle cx="2" cy="7" r="1.6" fill="#c4c4c4"/><circle cx="2" cy="12" r="1.6" fill="#c4c4c4"/></svg>
<div class="a" style="left:0px;top:662px;width:1005px;height:26px;background:#3c3c3c;"></div>
<div class="a" style="left:0px;top:688px;width:1005px;height:1px;background:#242424;"></div>
<svg style="left:8px;top:668px" width="15" height="15" viewBox="0 0 15 15"><path d="M7.5 0 V15 M0 7.5 H15" stroke="#c4c4c4" stroke-width="1.8"/></svg>
<div class="tri" style="left:28px;top:673px"></div>
<div class="a" style="left:425px;top:666px;width:396px;height:20px;background:#2a2a2a;border:1px solid #1e1e1e;border-radius:5px"></div>
<div class="a" style="left:799px;top:667px;width:21px;height:18px;background:#353535;border-radius:0 4px 4px 0"></div>
<svg style="left:429px;top:670px" width="12" height="12" viewBox="0 0 12 12"><circle cx="4.5" cy="4.5" r="3.3" fill="none" stroke="#c0c0c0" stroke-width="1.5"/><path d="M7 7 L11 11" stroke="#c0c0c0" stroke-width="2"/></svg>
<svg style="left:803px;top:670px" width="13" height="13" viewBox="0 0 13 13"><rect x="4.5" y="0.7" width="7.8" height="7.8" fill="none" stroke="#b8b8b8" stroke-width="1.1"/><rect x="0.7" y="8.3" width="4" height="4" fill="none" stroke="#b8b8b8" stroke-width="1.1"/><path d="M4.5 8.5 L10 3 M6.8 3 H10 V6.2" fill="none" stroke="#b8b8b8" stroke-width="1.1"/></svg>
<div class="a" style="left:855px;top:663px;width:1px;height:25px;background:#2c2c2c;"></div>
<div class="a" style="left:888px;top:663px;width:1px;height:25px;background:#2c2c2c;"></div>
<div class="a" style="left:921px;top:663px;width:1px;height:25px;background:#2c2c2c;"></div>
<div class="a" style="left:954px;top:663px;width:1px;height:25px;background:#2c2c2c;"></div>
<svg style="left:833px;top:667px" width="16" height="17" viewBox="0 0 16 17"><rect x="0.5" y="0" width="6.5" height="7" fill="#c4c4c4"/><circle cx="4" cy="12.5" r="4" fill="#c4c4c4"/><path d="M11 4 L15.5 12 H6.5Z" fill="#c4c4c4"/></svg>
<svg style="left:864px;top:668px" width="15" height="15" viewBox="0 0 15 15"><path d="M8 0.5 H14.5 V7 L7 14.5 L0.5 8Z" fill="#c4c4c4"/><circle cx="11" cy="4" r="1.4" fill="#3c3c3c"/></svg>
<svg style="left:897px;top:667px" width="16" height="16" viewBox="0 0 16 16"><circle cx="8" cy="8" r="7.8" fill="#d0d0d0"/><rect x="6.8" y="3" width="2.4" height="6.5" fill="#3c3c3c"/><circle cx="8" cy="12" r="1.3" fill="#3c3c3c"/></svg>
<svg style="left:930px;top:668px" width="15" height="15" viewBox="0 0 15 15"><path d="M7.5 0.5 L9.5 5.3 L14.5 5.6 L10.6 8.8 L11.9 13.8 L7.5 11 L3.1 13.8 L4.4 8.8 L0.5 5.6 L5.5 5.3Z" fill="#b0b0b0"/></svg>
<svg style="left:962px;top:670px" width="18" height="11" viewBox="0 0 18 11"><path d="M0.5 5.5 Q9 -3 17.5 5.5 Q9 14 0.5 5.5Z" fill="#5e5e5e"/><circle cx="9" cy="5.5" r="3" fill="#484848"/></svg>
<div class="t" style="left:980px;top:667px;font-size:15px;font-weight:400;letter-spacing:0.3px;color:#c8c8c8">18</div>
<div class="a" style="left:241px;top:689px;width:17px;height:196px;background:#3a3a3a;"></div>
<svg style="left:246px;top:697px" width="11" height="7" viewBox="0 0 11 7"><path d="M0 7 L5.5 0 L11 7Z" fill="#c4c4c4"/></svg>
<div class="a" style="left:245px;top:798px;width:12px;height:90px;background:#5f5f5f;border-radius:6px"></div>
<svg style="left:58px;top:696px" width="15" height="13" viewBox="0 0 15 13"><path d="M0 0.5 H5.5 L7 2.5 H15 V13 H0Z" fill="#c4c4c4"/></svg>
<div class="t" style="left:77px;top:692px;font-size:15px;font-weight:400;letter-spacing:0.55px;color:#d0d0d0">NPC</div>
<div class="trid" style="left:40px;top:718px;border-left-width:5px;border-right-width:5px;border-top-width:8px"></div>
<svg style="left:58px;top:716px" width="17" height="13" viewBox="0 0 17 13"><path d="M0.5 1 H5.5 L7 2.5 H13 V5 H3.5 L0.5 12Z" fill="#c4c4c4"/><path d="M3.5 5.5 H16.5 L13.5 12.5 H0.5Z" fill="none" stroke="#c4c4c4" stroke-width="1.2"/></svg>
<div class="t" style="left:77px;top:712px;font-size:15px;font-weight:400;letter-spacing:0.55px;color:#d0d0d0">UI</div>
<svg style="left:75px;top:736px" width="15" height="13" viewBox="0 0 15 13"><path d="M0 0.5 H5.5 L7 2.5 H15 V13 H0Z" fill="#c4c4c4"/></svg>
<div class="t" style="left:95px;top:732px;font-size:15px;font-weight:400;letter-spacing:0.55px;color:#d0d0d0">Items</div>
<svg style="left:75px;top:756px" width="15" height="13" viewBox="0 0 15 13"><path d="M0 0.5 H5.5 L7 2.5 H15 V13 H0Z" fill="#c4c4c4"/></svg>
<div class="t" style="left:95px;top:752px;font-size:15px;font-weight:400;letter-spacing:0.55px;color:#d0d0d0">Minimap</div>
<div class="trid" style="left:23px;top:778px;border-left-width:5px;border-right-width:5px;border-top-width:8px"></div>
<svg style="left:40px;top:776px" width="17" height="13" viewBox="0 0 17 13"><path d="M0.5 1 H5.5 L7 2.5 H13 V5 H3.5 L0.5 12Z" fill="#c4c4c4"/><path d="M3.5 5.5 H16.5 L13.5 12.5 H0.5Z" fill="none" stroke="#c4c4c4" stroke-width="1.2"/></svg>
<div class="t" style="left:60px;top:772px;font-size:15px;font-weight:400;letter-spacing:0.55px;color:#d0d0d0">Scripts</div>
<svg style="left:58px;top:796px" width="15" height="13" viewBox="0 0 15 13"><path d="M0 0.5 H5.5 L7 2.5 H15 V13 H0Z" fill="#c4c4c4"/></svg>
<div class="t" style="left:77px;top:792px;font-size:15px;font-weight:400;letter-spacing:0.55px;color:#d0d0d0">Assets</div>
<svg style="left:58px;top:816px" width="15" height="13" viewBox="0 0 15 13"><path d="M0 0.5 H5.5 L7 2.5 H15 V13 H0Z" fill="#c4c4c4"/></svg>
<div class="t" style="left:77px;top:812px;font-size:15px;font-weight:400;letter-spacing:0.55px;color:#d0d0d0">Entities</div>
<svg style="left:58px;top:836px" width="15" height="13" viewBox="0 0 15 13"><path d="M0 0.5 H5.5 L7 2.5 H15 V13 H0Z" fill="#c4c4c4"/></svg>
<div class="t" style="left:77px;top:832px;font-size:15px;font-weight:400;letter-spacing:0.55px;color:#d0d0d0">GameObject</div>
<svg style="left:58px;top:856px" width="15" height="13" viewBox="0 0 15 13"><path d="M0 0.5 H5.5 L7 2.5 H15 V13 H0Z" fill="#c4c4c4"/></svg>
<div class="t" style="left:77px;top:852px;font-size:15px;font-weight:400;letter-spacing:0.55px;color:#d0d0d0">Log</div>
<svg style="left:58px;top:876px" width="15" height="13" viewBox="0 0 15 13"><path d="M0 0.5 H5.5 L7 2.5 H15 V13 H0Z" fill="#c4c4c4"/></svg>
<div class="t" style="left:77px;top:872px;font-size:15px;font-weight:400;letter-spacing:0.55px;color:#d0d0d0">Managers</div>
<div class="a" style="left:258px;top:689px;width:2px;height:196px;background:#2c2c2c;"></div>
<div class="a" style="left:260px;top:689px;width:745px;height:26px;background:#3e3e3e;"></div>
<div class="a" style="left:260px;top:715px;width:745px;height:170px;background:#333333;"></div>
<div class="t" style="left:265px;top:692px;font-size:15px;font-weight:400;letter-spacing:0.55px;color:#c8c8c8">Assets</div>
<svg style="left:323px;top:696px" width="6" height="11" viewBox="0 0 6 11"><path d="M1 1 L5 5.5 L1 10" fill="none" stroke="#a8a8a8" stroke-width="1.3"/></svg>
<div class="t" style="left:335px;top:692px;font-size:15px;font-weight:400;letter-spacing:0.55px;color:#c8c8c8">Scripts</div>
<svg style="left:395px;top:696px" width="6" height="11" viewBox="0 0 6 11"><path d="M1 1 L5 5.5 L1 10" fill="none" stroke="#a8a8a8" stroke-width="1.3"/></svg>
<div class="t" style="left:408px;top:692px;font-size:15px;font-weight:400;letter-spacing:0.55px;color:#c8c8c8">UI</div>
<svg style="left:433px;top:696px" width="6" height="11" viewBox="0 0 6 11"><path d="M1 1 L5 5.5 L1 10" fill="none" stroke="#a8a8a8" stroke-width="1.3"/></svg>
<div class="t" style="left:445px;top:692px;font-size:15px;font-weight:700;letter-spacing:0px;color:#dcdcdc">TabView</div>
<svg style="left:294px;top:736px" width="91" height="105" viewBox="0 0 91 105"><path d="M5 0.5 H66 L90.5 25 V100 Q90.5 104.5 86 104.5 H5 Q0.5 104.5 0.5 100 V5 Q0.5 0.5 5 0.5Z" fill="#ebebeb"/><g fill="#217a2a"><path d="M36 20 H46 L38 84 H28Z"/><path d="M60 20 H70 L62 84 H52Z"/><rect x="18" y="37" width="60" height="10"/><rect x="14" y="57" width="60" height="10"/></g></svg>
<div class="t" style="left:303px;top:848px;font-size:14px;font-weight:400;letter-spacing:0.35px;color:#d0d0d0">TabButton</div>
<svg style="left:429px;top:736px" width="91" height="105" viewBox="0 0 91 105"><path d="M5 0.5 H66 L90.5 25 V100 Q90.5 104.5 86 104.5 H5 Q0.5 104.5 0.5 100 V5 Q0.5 0.5 5 0.5Z" fill="#ebebeb"/><g fill="#217a2a"><path d="M36 20 H46 L38 84 H28Z"/><path d="M60 20 H70 L62 84 H52Z"/><rect x="18" y="37" width="60" height="10"/><rect x="14" y="57" width="60" height="10"/></g></svg>
<div class="t" style="left:447px;top:848px;font-size:14px;font-weight:400;letter-spacing:0.35px;color:#d0d0d0">TabView</div>
<!-- CONSOLE -->
<div class="a" style="left:1005px;top:638px;width:3px;height:247px;background:#191919;"></div>
<div class="a" style="left:1008px;top:638px;width:499px;height:247px;background:#383838;"></div>
<div class="a" style="left:1008px;top:638px;width:499px;height:24px;background:#282828;"></div>
<div class="a" style="left:1008px;top:638px;width:109px;height:24px;background:#3c3c3c;border-radius:3px 3px 0 0"></div>
<div class="a" style="left:1010px;top:638px;width:107px;height:2px;background:#3a79bb;border-radius:2px 2px 0 0"></div>
<svg style="left:1019px;top:645px" width="12" height="13" viewBox="0 0 12 13"><rect x="0.7" y="0.7" width="10.6" height="11.6" fill="none" stroke="#c4c4c4" stroke-width="1.3"/><path d="M2.5 4 H9.5 M2.5 6.5 H9.5 M2.5 9 H9.5" stroke="#c4c4c4" stroke-width="1.2"/></svg>
<div class="t" style="left:1037px;top:641px;font-size:15px;font-weight:400;letter-spacing:0.55px;color:#d2d2d2">Console</div>
<svg style="left:1488px;top:644px" width="4" height="14" viewBox="0 0 4 14"><circle cx="2" cy="2" r="1.6" fill="#c4c4c4"/><circle cx="2" cy="7" r="1.6" fill="#c4c4c4"/><circle cx="2" cy="12" r="1.6" fill="#c4c4c4"/></svg>
<div class="a" style="left:1008px;top:662px;width:499px;height:26px;background:#3c3c3c;"></div>
<div class="a" style="left:1008px;top:688px;width:499px;height:1px;background:#242424;"></div>
<div class="t" style="left:1012px;top:667px;font-size:15px;font-weight:400;letter-spacing:0.55px;color:#d0d0d0">Clear</div>
<div class="a" style="left:1065px;top:664px;width:1px;height:22px;background:#2e2e2e;"></div>
<div class="tri" style="left:1063px;top:673px"></div>
<div class="a" style="left:1079px;top:663px;width:75px;height:25px;background:#474747;"></div>
<div class="t" style="left:1083px;top:667px;font-size:15px;font-weight:400;letter-spacing:0.55px;color:#b8b8b8">Collapse</div>
<div class="a" style="left:1380px;top:663px;width:41px;height:25px;background:#474747;"></div>
<div class="a" style="left:1422px;top:663px;width:41px;height:25px;background:#474747;"></div>
<div class="a" style="left:1464px;top:663px;width:43px;height:25px;background:#474747;"></div>
<svg style="left:1385px;top:668px" width="16" height="17" viewBox="0 0 16 17"><path d="M8 0.5 A7.5 7.5 0 1 1 4 14 L1 16 L2 12.5 A7.5 7.5 0 0 1 8 0.5Z" fill="#8a8a8a"/><rect x="6.8" y="3.5" width="2.4" height="6" fill="#474747"/><circle cx="8" cy="12" r="1.2" fill="#474747"/></svg>
<div class="t" style="left:1407px;top:667px;font-size:15px;font-weight:400;letter-spacing:0px;color:#c8c8c8">0</div>
<svg style="left:1429px;top:667px" width="17" height="16" viewBox="0 0 17 16"><path d="M8.5 0.5 L16.5 15.5 H0.5Z" fill="#f4c21a"/><rect x="7.5" y="5" width="2" height="6" fill="#2a2a2a"/><rect x="7.5" y="12" width="2" height="2" fill="#2a2a2a"/></svg>
<div class="t" style="left:1450px;top:667px;font-size:15px;font-weight:400;letter-spacing:0px;color:#c8c8c8">3</div>
<svg style="left:1470px;top:668px" width="16" height="16" viewBox="0 0 16 16"><circle cx="8" cy="8" r="7.8" fill="#d8d8d8"/><rect x="6.8" y="3" width="2.4" height="6.5" fill="#474747"/><circle cx="8" cy="12" r="1.3" fill="#474747"/></svg>
<div class="t" style="left:1492px;top:667px;font-size:15px;font-weight:400;letter-spacing:0px;color:#c8c8c8">0</div>
<div class="a" style="left:1507px;top:638px;width:2px;height:247px;background:#191919;"></div>
<!-- ARROW -->
<svg style="left:1460px;top:370px" width="200" height="140" viewBox="1460 370 200 140"><path d="M1469 381 L1630 484" stroke="#e8202a" stroke-width="3.8" stroke-linecap="round"/><path d="M1647 495 L1621 491 L1634 476Z" fill="#e8202a" stroke="#e8202a" stroke-width="2.5" stroke-linejoin="round"/></svg>

</body></html>
